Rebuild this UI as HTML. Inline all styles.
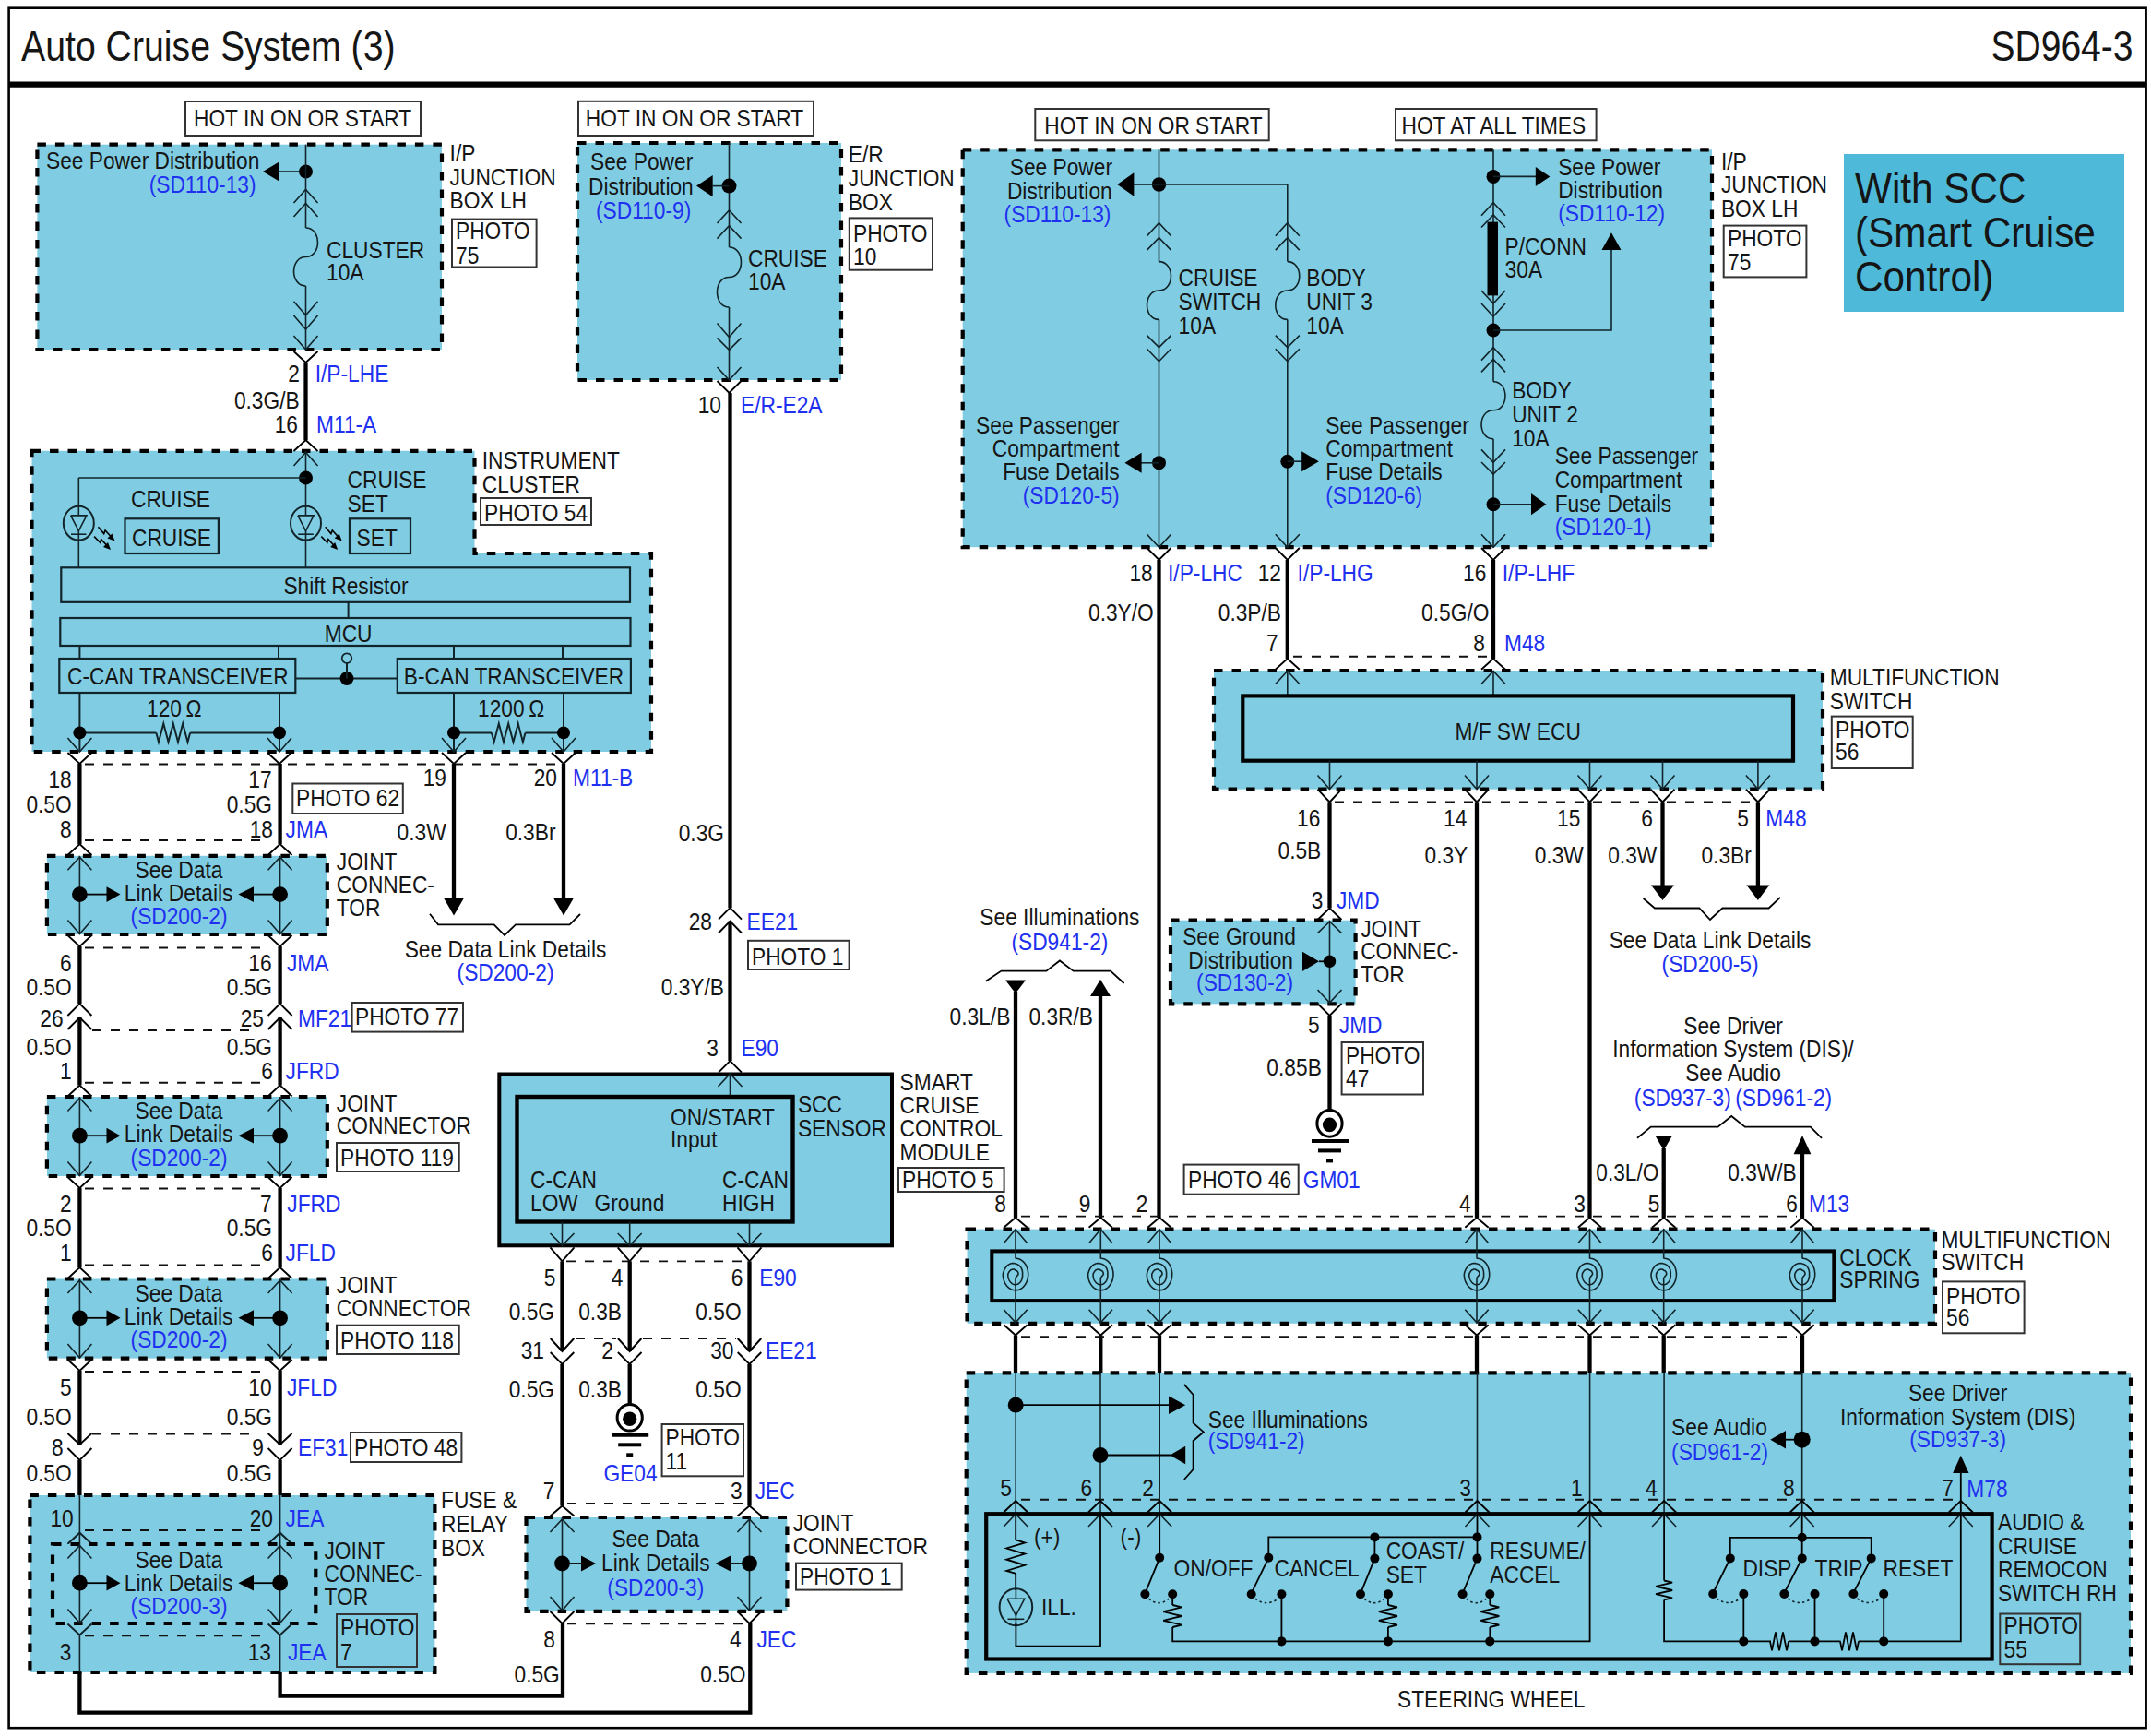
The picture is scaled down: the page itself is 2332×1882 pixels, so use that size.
<!DOCTYPE html>
<html><head><meta charset="utf-8"><style>
html,body{margin:0;padding:0;background:#fff;overflow:hidden;width:2332px;height:1882px;}
svg{display:block;}
text{font-family:"Liberation Sans",sans-serif;}
</style></head><body>
<svg width="2332" height="1882" viewBox="0 0 2332 1882">
<rect width="2332" height="1882" fill="#fff"/>
<rect x="9.6" y="8.7" width="2317" height="1864.5" fill="none" stroke="#000" stroke-width="2.6"/>
<line x1="9.6" y1="91.6" x2="2326.6" y2="91.6" stroke="#000" stroke-width="6.2"/>
<text transform="translate(23,66.3) scale(0.853,1)" font-size="46" fill="#151515">Auto Cruise System (3)</text>
<text transform="translate(2312.5,65.5) scale(0.86,1)" text-anchor="end" font-size="45.4" fill="#151515">SD964-3</text>
<rect x="201" y="110" width="255" height="37" fill="none" stroke="#333" stroke-width="2"/>
<text transform="translate(210,136.7) scale(0.91,1)" font-size="25" fill="#151515">HOT IN ON OR START</text>
<rect x="40.4" y="156.7" width="438.6" height="222.3" fill="#80cde3" stroke="#000" stroke-width="4.2" stroke-dasharray="9.5 10"/>
<text transform="translate(50,183) scale(0.91,1)" font-size="25" fill="#151515">See Power Distribution</text>
<text transform="translate(277.5,209) scale(0.91,1)" text-anchor="end" font-size="25" fill="#2030f0">(SD110-13)</text>
<polygon points="285,186 302.6,175.5 302.6,196.5" fill="#000"/>
<line x1="302" y1="186" x2="331.5" y2="186" stroke="#10242a" stroke-width="1.6"/>
<circle cx="331.5" cy="186" r="7.5" fill="#000"/>
<line x1="331.5" y1="156.7" x2="331.5" y2="247" stroke="#10242a" stroke-width="1.6"/>
<polyline points="318.5,220 331.5,205.5 344.5,220" stroke="#10242a" stroke-width="1.6" fill="none" stroke-linejoin="miter"/>
<polyline points="318.5,235 331.5,220.5 344.5,235" stroke="#10242a" stroke-width="1.6" fill="none" stroke-linejoin="miter"/>
<path d="M331.5,247 C348.8,247 348.8,278.5 331.5,278.5 C314.2,278.5 314.2,310 331.5,310" stroke="#10242a" stroke-width="1.6" fill="none"/>
<text transform="translate(354,280) scale(0.91,1)" font-size="25" fill="#151515">CLUSTER</text>
<text transform="translate(354,304) scale(0.91,1)" font-size="25" fill="#151515">10A</text>
<line x1="331.5" y1="310" x2="331.5" y2="379" stroke="#10242a" stroke-width="1.6"/>
<polyline points="318.5,326.7 331.5,341.7 344.5,326.7" stroke="#10242a" stroke-width="1.6" fill="none" stroke-linejoin="miter"/>
<polyline points="318.5,342 331.5,357 344.5,342" stroke="#10242a" stroke-width="1.6" fill="none" stroke-linejoin="miter"/>
<polyline points="318.5,364 331.5,379 344.5,364" stroke="#10242a" stroke-width="1.6" fill="none" stroke-linejoin="miter"/>
<polyline points="318.5,381 331.5,393 344.5,381" stroke="#000" stroke-width="1.9" fill="none" stroke-linejoin="miter"/>
<text transform="translate(487.6,175) scale(0.91,1)" font-size="25" fill="#151515">I/P</text>
<text transform="translate(487.6,200.5) scale(0.91,1)" font-size="25" fill="#151515">JUNCTION</text>
<text transform="translate(487.6,226) scale(0.91,1)" font-size="25" fill="#151515">BOX LH</text>
<rect x="490" y="237.6" width="91.6" height="51.9" fill="none" stroke="#333" stroke-width="2"/>
<text transform="translate(494,259) scale(0.91,1)" font-size="25" fill="#151515">PHOTO</text>
<text transform="translate(494,285.5) scale(0.91,1)" font-size="25" fill="#151515">75</text>
<line x1="331.5" y1="393" x2="331.5" y2="477" stroke="#000" stroke-width="4.3"/>
<text transform="translate(325,414) scale(0.91,1)" text-anchor="end" font-size="25" fill="#151515">2</text>
<text transform="translate(341.7,414) scale(0.91,1)" font-size="25" fill="#2030f0">I/P-LHE</text>
<text transform="translate(324.7,443) scale(0.91,1)" text-anchor="end" font-size="25" fill="#151515">0.3G/B</text>
<text transform="translate(323,468.5) scale(0.91,1)" text-anchor="end" font-size="25" fill="#151515">16</text>
<text transform="translate(343,468.5) scale(0.91,1)" font-size="25" fill="#2030f0">M11-A</text>
<polygon points="34.5,488.8 514.5,488.8 514.5,600 706,600 706,815 34.5,815" fill="#80cde3" stroke="#000" stroke-width="4.2" stroke-dasharray="9.5 10"/>
<polyline points="318.5,489 331.5,477 344.5,489" stroke="#000" stroke-width="1.9" fill="none" stroke-linejoin="miter"/>
<polyline points="318.5,505 331.5,490.5 344.5,505" stroke="#10242a" stroke-width="1.6" fill="none" stroke-linejoin="miter"/>
<line x1="331.5" y1="489" x2="331.5" y2="559" stroke="#10242a" stroke-width="1.6"/>
<line x1="331.5" y1="575" x2="331.5" y2="615" stroke="#10242a" stroke-width="1.6"/>
<circle cx="331.5" cy="518" r="7.5" fill="#000"/>
<line x1="85.3" y1="518" x2="331.5" y2="518" stroke="#10242a" stroke-width="1.6"/>
<line x1="85.3" y1="518" x2="85.3" y2="559" stroke="#10242a" stroke-width="1.6"/>
<line x1="85.3" y1="575" x2="85.3" y2="615" stroke="#10242a" stroke-width="1.6"/>
<ellipse cx="85.3" cy="567.2" rx="16.5" ry="18.4" fill="none" stroke="#10242a" stroke-width="2"/>
<polyline points="76.7,558.9 93.9,558.9 85.3,575.5 76.7,558.9" stroke="#10242a" stroke-width="1.6" fill="none" stroke-linejoin="miter"/>
<line x1="77" y1="579.2" x2="93.5" y2="579.2" stroke="#10242a" stroke-width="1.6"/>
<ellipse cx="331.5" cy="567.2" rx="16.5" ry="18.4" fill="none" stroke="#10242a" stroke-width="2"/>
<polyline points="322.9,558.9 340.1,558.9 331.5,575.5 322.9,558.9" stroke="#10242a" stroke-width="1.6" fill="none" stroke-linejoin="miter"/>
<line x1="323.2" y1="579.2" x2="339.8" y2="579.2" stroke="#10242a" stroke-width="1.6"/>
<polyline points="106.5,571.2 112.7,578.6 114.1,574.9 120.5,582" stroke="#000" stroke-width="1.6" fill="none" stroke-linejoin="miter"/>
<polygon points="124.5,586.5 116.5,583.5 121.5,578.5" fill="#000"/>
<polyline points="102.1,581.6 108.6,588.3 109.7,584.6 116,591.5" stroke="#000" stroke-width="1.6" fill="none" stroke-linejoin="miter"/>
<polygon points="120,596 112,593 117,588" fill="#000"/>
<polyline points="352.7,571.2 358.9,578.6 360.3,574.9 366.7,582" stroke="#000" stroke-width="1.6" fill="none" stroke-linejoin="miter"/>
<polygon points="370.7,586.5 362.7,583.5 367.7,578.5" fill="#000"/>
<polyline points="348.3,581.6 354.8,588.3 355.9,584.6 362.2,591.5" stroke="#000" stroke-width="1.6" fill="none" stroke-linejoin="miter"/>
<polygon points="366.2,596 358.2,593 363.2,588" fill="#000"/>
<text transform="translate(142,550.2) scale(0.91,1)" font-size="25" fill="#151515">CRUISE</text>
<rect x="135.5" y="562.3" width="101.4" height="37.7" fill="none" stroke="#10242a" stroke-width="2.2"/>
<text transform="translate(143,591.5) scale(0.91,1)" font-size="25" fill="#151515">CRUISE</text>
<text transform="translate(376.6,529) scale(0.91,1)" font-size="25" fill="#151515">CRUISE</text>
<text transform="translate(376.6,554.7) scale(0.91,1)" font-size="25" fill="#151515">SET</text>
<rect x="379" y="562.3" width="66" height="37.7" fill="none" stroke="#10242a" stroke-width="2.2"/>
<text transform="translate(386.6,591.5) scale(0.91,1)" font-size="25" fill="#151515">SET</text>
<text transform="translate(522.8,508) scale(0.91,1)" font-size="25" fill="#151515">INSTRUMENT</text>
<text transform="translate(522.8,534) scale(0.91,1)" font-size="25" fill="#151515">CLUSTER</text>
<rect x="521" y="540" width="120" height="29" fill="none" stroke="#333" stroke-width="2"/>
<text transform="translate(525,564.8) scale(0.91,1)" font-size="25" fill="#151515">PHOTO 54</text>
<rect x="66.3" y="615.3" width="616.7" height="37.5" fill="none" stroke="#10242a" stroke-width="2.2"/>
<text transform="translate(375,644.4) scale(0.91,1)" text-anchor="middle" font-size="25" fill="#151515">Shift Resistor</text>
<line x1="377.6" y1="652.8" x2="377.6" y2="670" stroke="#10242a" stroke-width="2"/>
<rect x="65.3" y="670" width="618.2" height="30" fill="none" stroke="#10242a" stroke-width="2.2"/>
<text transform="translate(377.6,695.6) scale(0.91,1)" text-anchor="middle" font-size="25" fill="#151515">MCU</text>
<line x1="86.4" y1="700" x2="86.4" y2="714" stroke="#10242a" stroke-width="2"/>
<line x1="302" y1="700" x2="302" y2="714" stroke="#10242a" stroke-width="2"/>
<line x1="492" y1="700" x2="492" y2="714" stroke="#10242a" stroke-width="2"/>
<line x1="610" y1="700" x2="610" y2="714" stroke="#10242a" stroke-width="2"/>
<rect x="64.3" y="714" width="256" height="37" fill="none" stroke="#10242a" stroke-width="2.2"/>
<text transform="translate(73,742) scale(0.91,1)" font-size="25" fill="#151515">C-CAN TRANSCEIVER</text>
<rect x="430.8" y="714" width="253.1" height="37" fill="none" stroke="#10242a" stroke-width="2.2"/>
<text transform="translate(437.8,742) scale(0.91,1)" font-size="25" fill="#151515">B-CAN TRANSCEIVER</text>
<line x1="320.3" y1="735.5" x2="430.8" y2="735.5" stroke="#10242a" stroke-width="2"/>
<circle cx="376" cy="735.5" r="7.4" fill="#000"/>
<circle cx="376" cy="713.7" r="5.3" fill="none" stroke="#10242a" stroke-width="1.8"/>
<line x1="376" y1="719" x2="376" y2="735.5" stroke="#10242a" stroke-width="2"/>
<line x1="86.4" y1="751" x2="86.4" y2="815" stroke="#10242a" stroke-width="2"/>
<line x1="303" y1="751" x2="303" y2="815" stroke="#10242a" stroke-width="2"/>
<line x1="492" y1="751" x2="492" y2="815" stroke="#10242a" stroke-width="2"/>
<line x1="611" y1="751" x2="611" y2="815" stroke="#10242a" stroke-width="2"/>
<line x1="86.4" y1="794.4" x2="169.4" y2="794.4" stroke="#10242a" stroke-width="2"/>
<polyline points="169.4,794.4 172,804.4 177.3,784.4 182.5,804.4 187.8,784.4 193,804.4 198.2,784.4 203.5,804.4 206.1,794.4" stroke="#10242a" stroke-width="2" fill="none" stroke-linejoin="miter"/>
<line x1="206.1" y1="794.4" x2="303" y2="794.4" stroke="#10242a" stroke-width="2"/>
<line x1="492" y1="794.4" x2="533" y2="794.4" stroke="#10242a" stroke-width="2"/>
<polyline points="533,794.4 535.6,804.4 540.8,784.4 546,804.4 551.2,784.4 556.5,804.4 561.7,784.4 566.9,804.4 569.5,794.4" stroke="#10242a" stroke-width="2" fill="none" stroke-linejoin="miter"/>
<line x1="569.5" y1="794.4" x2="611" y2="794.4" stroke="#10242a" stroke-width="2"/>
<circle cx="86.4" cy="794.4" r="7" fill="#000"/>
<polyline points="73.4,800 86.4,815 99.4,800" stroke="#10242a" stroke-width="1.6" fill="none" stroke-linejoin="miter"/>
<polyline points="73.4,816 86.4,828 99.4,816" stroke="#000" stroke-width="1.9" fill="none" stroke-linejoin="miter"/>
<circle cx="303" cy="794.4" r="7" fill="#000"/>
<polyline points="290,800 303,815 316,800" stroke="#10242a" stroke-width="1.6" fill="none" stroke-linejoin="miter"/>
<polyline points="290,816 303,828 316,816" stroke="#000" stroke-width="1.9" fill="none" stroke-linejoin="miter"/>
<circle cx="492" cy="794.4" r="7" fill="#000"/>
<polyline points="479,800 492,815 505,800" stroke="#10242a" stroke-width="1.6" fill="none" stroke-linejoin="miter"/>
<polyline points="479,816 492,828 505,816" stroke="#000" stroke-width="1.9" fill="none" stroke-linejoin="miter"/>
<circle cx="611" cy="794.4" r="7" fill="#000"/>
<polyline points="598,800 611,815 624,800" stroke="#10242a" stroke-width="1.6" fill="none" stroke-linejoin="miter"/>
<polyline points="598,816 611,828 624,816" stroke="#000" stroke-width="1.9" fill="none" stroke-linejoin="miter"/>
<text transform="translate(159,776.7) scale(0.91,1)" font-size="25" fill="#151515">120 Ω</text>
<text transform="translate(518,777) scale(0.91,1)" font-size="25" fill="#151515">1200 Ω</text>
<line x1="92" y1="828.5" x2="605" y2="828.5" stroke="#111" stroke-width="1.9" stroke-dasharray="10 10"/>
<line x1="86.4" y1="828" x2="86.4" y2="915" stroke="#000" stroke-width="4.3"/>
<line x1="303.6" y1="828" x2="303.6" y2="915" stroke="#000" stroke-width="4.3"/>
<text transform="translate(77.7,853.5) scale(0.91,1)" text-anchor="end" font-size="25" fill="#151515">18</text>
<text transform="translate(77.7,881) scale(0.91,1)" text-anchor="end" font-size="25" fill="#151515">0.5O</text>
<text transform="translate(77.7,907.7) scale(0.91,1)" text-anchor="end" font-size="25" fill="#151515">8</text>
<text transform="translate(294.6,853.5) scale(0.91,1)" text-anchor="end" font-size="25" fill="#151515">17</text>
<text transform="translate(295,881) scale(0.91,1)" text-anchor="end" font-size="25" fill="#151515">0.5G</text>
<text transform="translate(296,907.7) scale(0.91,1)" text-anchor="end" font-size="25" fill="#151515">18</text>
<text transform="translate(309.6,907.7) scale(0.91,1)" font-size="25" fill="#2030f0">JMA</text>
<rect x="317.3" y="849.5" width="119.5" height="32.5" fill="none" stroke="#333" stroke-width="2"/>
<text transform="translate(321,874) scale(0.91,1)" font-size="25" fill="#151515">PHOTO 62</text>
<text transform="translate(484,852) scale(0.91,1)" text-anchor="end" font-size="25" fill="#151515">19</text>
<text transform="translate(604,852) scale(0.91,1)" text-anchor="end" font-size="25" fill="#151515">20</text>
<text transform="translate(621,852) scale(0.91,1)" font-size="25" fill="#2030f0">M11-B</text>
<text transform="translate(483.7,911) scale(0.91,1)" text-anchor="end" font-size="25" fill="#151515">0.3W</text>
<text transform="translate(602.5,911) scale(0.91,1)" text-anchor="end" font-size="25" fill="#151515">0.3Br</text>
<line x1="492" y1="828" x2="492" y2="976" stroke="#000" stroke-width="4.3"/>
<line x1="611" y1="828" x2="611" y2="976" stroke="#000" stroke-width="4.3"/>
<polygon points="492,992.4 481.3,974 502.7,974" fill="#000"/>
<polygon points="611,992.4 600.3,974 621.7,974" fill="#000"/>
<polyline points="466,990.7 475,1002.4 535.6,1002.4 547,1014 559,1002.4 617.6,1002.4 629,991" stroke="#000" stroke-width="1.8" fill="none" stroke-linejoin="miter"/>
<text transform="translate(548,1037.6) scale(0.91,1)" text-anchor="middle" font-size="25" fill="#151515">See Data Link Details</text>
<text transform="translate(548,1063) scale(0.91,1)" text-anchor="middle" font-size="25" fill="#2030f0">(SD200-2)</text>
<line x1="92" y1="911" x2="292" y2="911" stroke="#111" stroke-width="1.9" stroke-dasharray="10 10"/>
<polyline points="73.4,927 86.4,915 99.4,927" stroke="#000" stroke-width="1.9" fill="none" stroke-linejoin="miter"/>
<polyline points="290.6,927 303.6,915 316.6,927" stroke="#000" stroke-width="1.9" fill="none" stroke-linejoin="miter"/>
<rect x="50.9" y="927.8" width="303.9" height="85.2" fill="#80cde3" stroke="#000" stroke-width="4.2" stroke-dasharray="9.5 10"/>
<line x1="86.4" y1="927.8" x2="86.4" y2="1013" stroke="#10242a" stroke-width="1.6"/>
<polyline points="73.4,943.3 86.4,929.3 99.4,943.3" stroke="#10242a" stroke-width="1.6" fill="none" stroke-linejoin="miter"/>
<polyline points="73.4,997.5 86.4,1012.5 99.4,997.5" stroke="#10242a" stroke-width="1.6" fill="none" stroke-linejoin="miter"/>
<line x1="303.6" y1="927.8" x2="303.6" y2="1013" stroke="#10242a" stroke-width="1.6"/>
<polyline points="290.6,943.3 303.6,929.3 316.6,943.3" stroke="#10242a" stroke-width="1.6" fill="none" stroke-linejoin="miter"/>
<polyline points="290.6,997.5 303.6,1012.5 316.6,997.5" stroke="#10242a" stroke-width="1.6" fill="none" stroke-linejoin="miter"/>
<circle cx="86.4" cy="969.6" r="8.4" fill="#000"/>
<circle cx="303.6" cy="969.6" r="8.4" fill="#000"/>
<line x1="86.4" y1="969.6" x2="116" y2="969.6" stroke="#000" stroke-width="1.8"/>
<polygon points="130.5,969.6 115.5,961.2 115.5,978" fill="#000"/>
<line x1="274" y1="969.6" x2="303.6" y2="969.6" stroke="#000" stroke-width="1.8"/>
<polygon points="258.4,969.6 275,961.2 275,978" fill="#000"/>
<text transform="translate(194,952) scale(0.91,1)" text-anchor="middle" font-size="25" fill="#151515">See Data</text>
<text transform="translate(193.6,977) scale(0.91,1)" text-anchor="middle" font-size="25" fill="#151515">Link Details</text>
<text transform="translate(194,1002.4) scale(0.91,1)" text-anchor="middle" font-size="25" fill="#2030f0">(SD200-2)</text>
<text transform="translate(364.8,942.8) scale(0.91,1)" font-size="25" fill="#151515">JOINT</text>
<text transform="translate(364.8,968.1) scale(0.91,1)" font-size="25" fill="#151515">CONNEC-</text>
<text transform="translate(364.8,993.4) scale(0.91,1)" font-size="25" fill="#151515">TOR</text>
<polyline points="73.4,1014 86.4,1026 99.4,1014" stroke="#000" stroke-width="1.9" fill="none" stroke-linejoin="miter"/>
<polyline points="290.6,1014 303.6,1026 316.6,1014" stroke="#000" stroke-width="1.9" fill="none" stroke-linejoin="miter"/>
<line x1="92" y1="1027.5" x2="292" y2="1027.5" stroke="#111" stroke-width="1.9" stroke-dasharray="10 10"/>
<line x1="86.4" y1="1026" x2="86.4" y2="1088" stroke="#000" stroke-width="4.3"/>
<line x1="303.6" y1="1026" x2="303.6" y2="1088" stroke="#000" stroke-width="4.3"/>
<text transform="translate(77.7,1052.6) scale(0.91,1)" text-anchor="end" font-size="25" fill="#151515">6</text>
<text transform="translate(77.7,1079.4) scale(0.91,1)" text-anchor="end" font-size="25" fill="#151515">0.5O</text>
<text transform="translate(68.6,1112.9) scale(0.91,1)" text-anchor="end" font-size="25" fill="#151515">26</text>
<text transform="translate(294.6,1052.6) scale(0.91,1)" text-anchor="end" font-size="25" fill="#151515">16</text>
<text transform="translate(311,1052.6) scale(0.91,1)" font-size="25" fill="#2030f0">JMA</text>
<text transform="translate(295,1079) scale(0.91,1)" text-anchor="end" font-size="25" fill="#151515">0.5G</text>
<text transform="translate(286,1113) scale(0.91,1)" text-anchor="end" font-size="25" fill="#151515">25</text>
<text transform="translate(323,1113) scale(0.91,1)" font-size="25" fill="#2030f0">MF21</text>
<rect x="381.6" y="1087" width="120.4" height="31.6" fill="none" stroke="#333" stroke-width="2"/>
<text transform="translate(385,1111) scale(0.91,1)" font-size="25" fill="#151515">PHOTO 77</text>
<polyline points="73.4,1101 86.4,1088 99.4,1101" stroke="#000" stroke-width="1.9" fill="none" stroke-linejoin="miter"/>
<polyline points="73.4,1116 86.4,1103 99.4,1116" stroke="#000" stroke-width="1.9" fill="none" stroke-linejoin="miter"/>
<line x1="86.4" y1="1103" x2="86.4" y2="1176.5" stroke="#000" stroke-width="4.3"/>
<polyline points="290.6,1101 303.6,1088 316.6,1101" stroke="#000" stroke-width="1.9" fill="none" stroke-linejoin="miter"/>
<polyline points="290.6,1116 303.6,1103 316.6,1116" stroke="#000" stroke-width="1.9" fill="none" stroke-linejoin="miter"/>
<line x1="303.6" y1="1103" x2="303.6" y2="1176.5" stroke="#000" stroke-width="4.3"/>
<line x1="100" y1="1117" x2="280" y2="1117" stroke="#111" stroke-width="1.9" stroke-dasharray="10 10"/>
<text transform="translate(77.7,1144) scale(0.91,1)" text-anchor="end" font-size="25" fill="#151515">0.5O</text>
<text transform="translate(77.7,1170) scale(0.91,1)" text-anchor="end" font-size="25" fill="#151515">1</text>
<text transform="translate(295,1144) scale(0.91,1)" text-anchor="end" font-size="25" fill="#151515">0.5G</text>
<text transform="translate(296,1170) scale(0.91,1)" text-anchor="end" font-size="25" fill="#151515">6</text>
<text transform="translate(309.6,1170) scale(0.91,1)" font-size="25" fill="#2030f0">JFRD</text>
<line x1="92" y1="1173.8" x2="292" y2="1173.8" stroke="#111" stroke-width="1.9" stroke-dasharray="10 10"/>
<polyline points="73.4,1188.5 86.4,1176.5 99.4,1188.5" stroke="#000" stroke-width="1.9" fill="none" stroke-linejoin="miter"/>
<polyline points="290.6,1188.5 303.6,1176.5 316.6,1188.5" stroke="#000" stroke-width="1.9" fill="none" stroke-linejoin="miter"/>
<rect x="50.9" y="1189" width="303.9" height="86" fill="#80cde3" stroke="#000" stroke-width="4.2" stroke-dasharray="9.5 10"/>
<line x1="86.4" y1="1189" x2="86.4" y2="1275" stroke="#10242a" stroke-width="1.6"/>
<polyline points="73.4,1204.5 86.4,1190.5 99.4,1204.5" stroke="#10242a" stroke-width="1.6" fill="none" stroke-linejoin="miter"/>
<polyline points="73.4,1259.5 86.4,1274.5 99.4,1259.5" stroke="#10242a" stroke-width="1.6" fill="none" stroke-linejoin="miter"/>
<line x1="303.6" y1="1189" x2="303.6" y2="1275" stroke="#10242a" stroke-width="1.6"/>
<polyline points="290.6,1204.5 303.6,1190.5 316.6,1204.5" stroke="#10242a" stroke-width="1.6" fill="none" stroke-linejoin="miter"/>
<polyline points="290.6,1259.5 303.6,1274.5 316.6,1259.5" stroke="#10242a" stroke-width="1.6" fill="none" stroke-linejoin="miter"/>
<circle cx="86.4" cy="1231.2" r="8.4" fill="#000"/>
<circle cx="303.6" cy="1231.2" r="8.4" fill="#000"/>
<line x1="86.4" y1="1231.2" x2="116" y2="1231.2" stroke="#000" stroke-width="1.8"/>
<polygon points="130.5,1231.2 115.5,1222.8 115.5,1239.6" fill="#000"/>
<line x1="274" y1="1231.2" x2="303.6" y2="1231.2" stroke="#000" stroke-width="1.8"/>
<polygon points="258.4,1231.2 275,1222.8 275,1239.6" fill="#000"/>
<text transform="translate(194,1213.2) scale(0.91,1)" text-anchor="middle" font-size="25" fill="#151515">See Data</text>
<text transform="translate(193.6,1238.2) scale(0.91,1)" text-anchor="middle" font-size="25" fill="#151515">Link Details</text>
<text transform="translate(194,1263.6) scale(0.91,1)" text-anchor="middle" font-size="25" fill="#2030f0">(SD200-2)</text>
<text transform="translate(364.8,1205) scale(0.91,1)" font-size="25" fill="#151515">JOINT</text>
<text transform="translate(364.8,1229) scale(0.91,1)" font-size="25" fill="#151515">CONNECTOR</text>
<rect x="365" y="1239" width="132.7" height="31" fill="none" stroke="#333" stroke-width="2"/>
<text transform="translate(369,1263.5) scale(0.91,1)" font-size="25" fill="#151515">PHOTO 119</text>
<polyline points="73.4,1276 86.4,1288 99.4,1276" stroke="#000" stroke-width="1.9" fill="none" stroke-linejoin="miter"/>
<polyline points="290.6,1276 303.6,1288 316.6,1276" stroke="#000" stroke-width="1.9" fill="none" stroke-linejoin="miter"/>
<line x1="92" y1="1288.5" x2="292" y2="1288.5" stroke="#111" stroke-width="1.9" stroke-dasharray="10 10"/>
<line x1="86.4" y1="1288" x2="86.4" y2="1374" stroke="#000" stroke-width="4.3"/>
<line x1="303.6" y1="1288" x2="303.6" y2="1374" stroke="#000" stroke-width="4.3"/>
<text transform="translate(77.7,1313.6) scale(0.91,1)" text-anchor="end" font-size="25" fill="#151515">2</text>
<text transform="translate(77.7,1340) scale(0.91,1)" text-anchor="end" font-size="25" fill="#151515">0.5O</text>
<text transform="translate(77.7,1367) scale(0.91,1)" text-anchor="end" font-size="25" fill="#151515">1</text>
<text transform="translate(294.6,1313.6) scale(0.91,1)" text-anchor="end" font-size="25" fill="#151515">7</text>
<text transform="translate(311.3,1313.6) scale(0.91,1)" font-size="25" fill="#2030f0">JFRD</text>
<text transform="translate(295,1340) scale(0.91,1)" text-anchor="end" font-size="25" fill="#151515">0.5G</text>
<text transform="translate(296,1367) scale(0.91,1)" text-anchor="end" font-size="25" fill="#151515">6</text>
<text transform="translate(309.6,1367) scale(0.91,1)" font-size="25" fill="#2030f0">JFLD</text>
<line x1="92" y1="1371.5" x2="292" y2="1371.5" stroke="#111" stroke-width="1.9" stroke-dasharray="10 10"/>
<polyline points="73.4,1386 86.4,1374 99.4,1386" stroke="#000" stroke-width="1.9" fill="none" stroke-linejoin="miter"/>
<polyline points="290.6,1386 303.6,1374 316.6,1386" stroke="#000" stroke-width="1.9" fill="none" stroke-linejoin="miter"/>
<rect x="50.9" y="1386.5" width="303.9" height="86.1" fill="#80cde3" stroke="#000" stroke-width="4.2" stroke-dasharray="9.5 10"/>
<line x1="86.4" y1="1386.5" x2="86.4" y2="1472.6" stroke="#10242a" stroke-width="1.6"/>
<polyline points="73.4,1402 86.4,1388 99.4,1402" stroke="#10242a" stroke-width="1.6" fill="none" stroke-linejoin="miter"/>
<polyline points="73.4,1457.1 86.4,1472.1 99.4,1457.1" stroke="#10242a" stroke-width="1.6" fill="none" stroke-linejoin="miter"/>
<line x1="303.6" y1="1386.5" x2="303.6" y2="1472.6" stroke="#10242a" stroke-width="1.6"/>
<polyline points="290.6,1402 303.6,1388 316.6,1402" stroke="#10242a" stroke-width="1.6" fill="none" stroke-linejoin="miter"/>
<polyline points="290.6,1457.1 303.6,1472.1 316.6,1457.1" stroke="#10242a" stroke-width="1.6" fill="none" stroke-linejoin="miter"/>
<circle cx="86.4" cy="1428.8" r="8.4" fill="#000"/>
<circle cx="303.6" cy="1428.8" r="8.4" fill="#000"/>
<line x1="86.4" y1="1428.8" x2="116" y2="1428.8" stroke="#000" stroke-width="1.8"/>
<polygon points="130.5,1428.8 115.5,1420.3 115.5,1437.2" fill="#000"/>
<line x1="274" y1="1428.8" x2="303.6" y2="1428.8" stroke="#000" stroke-width="1.8"/>
<polygon points="258.4,1428.8 275,1420.3 275,1437.2" fill="#000"/>
<text transform="translate(194,1410.7) scale(0.91,1)" text-anchor="middle" font-size="25" fill="#151515">See Data</text>
<text transform="translate(193.6,1435.7) scale(0.91,1)" text-anchor="middle" font-size="25" fill="#151515">Link Details</text>
<text transform="translate(194,1461.1) scale(0.91,1)" text-anchor="middle" font-size="25" fill="#2030f0">(SD200-2)</text>
<text transform="translate(364.8,1402) scale(0.91,1)" font-size="25" fill="#151515">JOINT</text>
<text transform="translate(364.8,1427) scale(0.91,1)" font-size="25" fill="#151515">CONNECTOR</text>
<rect x="365" y="1436.7" width="132.7" height="31.3" fill="none" stroke="#333" stroke-width="2"/>
<text transform="translate(369,1462) scale(0.91,1)" font-size="25" fill="#151515">PHOTO 118</text>
<polyline points="73.4,1474 86.4,1486 99.4,1474" stroke="#000" stroke-width="1.9" fill="none" stroke-linejoin="miter"/>
<polyline points="290.6,1474 303.6,1486 316.6,1474" stroke="#000" stroke-width="1.9" fill="none" stroke-linejoin="miter"/>
<line x1="92" y1="1487" x2="292" y2="1487" stroke="#111" stroke-width="1.9" stroke-dasharray="10 10"/>
<line x1="86.4" y1="1486" x2="86.4" y2="1566" stroke="#000" stroke-width="4.3"/>
<line x1="303.6" y1="1486" x2="303.6" y2="1566" stroke="#000" stroke-width="4.3"/>
<text transform="translate(77.7,1512.7) scale(0.91,1)" text-anchor="end" font-size="25" fill="#151515">5</text>
<text transform="translate(77.7,1544.5) scale(0.91,1)" text-anchor="end" font-size="25" fill="#151515">0.5O</text>
<text transform="translate(68.6,1578) scale(0.91,1)" text-anchor="end" font-size="25" fill="#151515">8</text>
<text transform="translate(77.7,1606.4) scale(0.91,1)" text-anchor="end" font-size="25" fill="#151515">0.5O</text>
<text transform="translate(294.6,1512.7) scale(0.91,1)" text-anchor="end" font-size="25" fill="#151515">10</text>
<text transform="translate(311,1512.7) scale(0.91,1)" font-size="25" fill="#2030f0">JFLD</text>
<text transform="translate(295,1544.5) scale(0.91,1)" text-anchor="end" font-size="25" fill="#151515">0.5G</text>
<text transform="translate(286,1578) scale(0.91,1)" text-anchor="end" font-size="25" fill="#151515">9</text>
<text transform="translate(323,1578) scale(0.91,1)" font-size="25" fill="#2030f0">EF31</text>
<rect x="380" y="1553" width="120.4" height="32" fill="none" stroke="#333" stroke-width="2"/>
<text transform="translate(384,1578) scale(0.91,1)" font-size="25" fill="#151515">PHOTO 48</text>
<polyline points="73.4,1554 86.4,1566 99.4,1554" stroke="#000" stroke-width="1.9" fill="none" stroke-linejoin="miter"/>
<polyline points="73.4,1570 86.4,1583 99.4,1570" stroke="#000" stroke-width="1.9" fill="none" stroke-linejoin="miter"/>
<line x1="86.4" y1="1583" x2="86.4" y2="1621" stroke="#000" stroke-width="4.3"/>
<polyline points="290.6,1554 303.6,1566 316.6,1554" stroke="#000" stroke-width="1.9" fill="none" stroke-linejoin="miter"/>
<polyline points="290.6,1570 303.6,1583 316.6,1570" stroke="#000" stroke-width="1.9" fill="none" stroke-linejoin="miter"/>
<line x1="303.6" y1="1583" x2="303.6" y2="1621" stroke="#000" stroke-width="4.3"/>
<line x1="100" y1="1554.6" x2="280" y2="1554.6" stroke="#111" stroke-width="1.9" stroke-dasharray="10 10"/>
<text transform="translate(295,1606.4) scale(0.91,1)" text-anchor="end" font-size="25" fill="#151515">0.5G</text>
<rect x="32.4" y="1621" width="439" height="192" fill="#80cde3" stroke="#000" stroke-width="4.2" stroke-dasharray="9.5 10"/>
<text transform="translate(478,1635) scale(0.91,1)" font-size="25" fill="#151515">FUSE &amp;</text>
<text transform="translate(478,1660.9) scale(0.91,1)" font-size="25" fill="#151515">RELAY</text>
<text transform="translate(478,1686.8) scale(0.91,1)" font-size="25" fill="#151515">BOX</text>
<line x1="86.4" y1="1621" x2="86.4" y2="1674" stroke="#10242a" stroke-width="1.6"/>
<polyline points="73.4,1673.7 86.4,1661.7 99.4,1673.7" stroke="#10242a" stroke-width="2" fill="none" stroke-linejoin="miter"/>
<line x1="303.6" y1="1621" x2="303.6" y2="1674" stroke="#10242a" stroke-width="1.6"/>
<polyline points="290.6,1673.7 303.6,1661.7 316.6,1673.7" stroke="#10242a" stroke-width="2" fill="none" stroke-linejoin="miter"/>
<text transform="translate(79.7,1655) scale(0.91,1)" text-anchor="end" font-size="25" fill="#151515">10</text>
<text transform="translate(296,1655) scale(0.91,1)" text-anchor="end" font-size="25" fill="#151515">20</text>
<text transform="translate(309.6,1655) scale(0.91,1)" font-size="25" fill="#2030f0">JEA</text>
<line x1="92" y1="1659" x2="292" y2="1659" stroke="#111" stroke-width="1.9" stroke-dasharray="10 10"/>
<rect x="57" y="1674" width="285.3" height="86" fill="#80cde3" stroke="#000" stroke-width="4.2" stroke-dasharray="9.5 10"/>
<line x1="86.4" y1="1674" x2="86.4" y2="1760" stroke="#10242a" stroke-width="1.6"/>
<polyline points="73.4,1689.5 86.4,1675.5 99.4,1689.5" stroke="#10242a" stroke-width="1.6" fill="none" stroke-linejoin="miter"/>
<polyline points="73.4,1744.5 86.4,1759.5 99.4,1744.5" stroke="#10242a" stroke-width="1.6" fill="none" stroke-linejoin="miter"/>
<line x1="303.6" y1="1674" x2="303.6" y2="1760" stroke="#10242a" stroke-width="1.6"/>
<polyline points="290.6,1689.5 303.6,1675.5 316.6,1689.5" stroke="#10242a" stroke-width="1.6" fill="none" stroke-linejoin="miter"/>
<polyline points="290.6,1744.5 303.6,1759.5 316.6,1744.5" stroke="#10242a" stroke-width="1.6" fill="none" stroke-linejoin="miter"/>
<circle cx="86.4" cy="1716.2" r="8.4" fill="#000"/>
<circle cx="303.6" cy="1716.2" r="8.4" fill="#000"/>
<line x1="86.4" y1="1716.2" x2="116" y2="1716.2" stroke="#000" stroke-width="1.8"/>
<polygon points="130.5,1716.2 115.5,1707.8 115.5,1724.6" fill="#000"/>
<line x1="274" y1="1716.2" x2="303.6" y2="1716.2" stroke="#000" stroke-width="1.8"/>
<polygon points="258.4,1716.2 275,1707.8 275,1724.6" fill="#000"/>
<text transform="translate(194,1700) scale(0.91,1)" text-anchor="middle" font-size="25" fill="#151515">See Data</text>
<text transform="translate(193.6,1725) scale(0.91,1)" text-anchor="middle" font-size="25" fill="#151515">Link Details</text>
<text transform="translate(194,1750.4) scale(0.91,1)" text-anchor="middle" font-size="25" fill="#2030f0">(SD200-3)</text>
<text transform="translate(351.5,1690) scale(0.91,1)" font-size="25" fill="#151515">JOINT</text>
<text transform="translate(351.5,1715) scale(0.91,1)" font-size="25" fill="#151515">CONNEC-</text>
<text transform="translate(351.5,1740) scale(0.91,1)" font-size="25" fill="#151515">TOR</text>
<polyline points="73.4,1760.4 86.4,1772.4 99.4,1760.4" stroke="#10242a" stroke-width="2" fill="none" stroke-linejoin="miter"/>
<line x1="86.4" y1="1772" x2="86.4" y2="1813" stroke="#10242a" stroke-width="1.6"/>
<polyline points="290.6,1760.4 303.6,1772.4 316.6,1760.4" stroke="#10242a" stroke-width="2" fill="none" stroke-linejoin="miter"/>
<line x1="303.6" y1="1772" x2="303.6" y2="1813" stroke="#10242a" stroke-width="1.6"/>
<line x1="92" y1="1773.4" x2="292" y2="1773.4" stroke="#111" stroke-width="1.9" stroke-dasharray="10 10"/>
<text transform="translate(77.4,1800) scale(0.91,1)" text-anchor="end" font-size="25" fill="#151515">3</text>
<text transform="translate(294,1800) scale(0.91,1)" text-anchor="end" font-size="25" fill="#151515">13</text>
<text transform="translate(311.9,1800) scale(0.91,1)" font-size="25" fill="#2030f0">JEA</text>
<rect x="365" y="1750" width="87" height="57" fill="none" stroke="#333" stroke-width="2"/>
<text transform="translate(369,1773) scale(0.91,1)" font-size="25" fill="#151515">PHOTO</text>
<text transform="translate(369,1800) scale(0.91,1)" font-size="25" fill="#151515">7</text>
<polyline points="86.4,1813 86.4,1856.6 813.3,1856.6 813.3,1760" stroke="#000" stroke-width="4.3" fill="none" stroke-linejoin="miter"/>
<polyline points="303.6,1813 303.6,1838.7 610,1838.7 610,1760" stroke="#000" stroke-width="4.3" fill="none" stroke-linejoin="miter"/>
<rect x="627" y="109.8" width="255" height="37.2" fill="none" stroke="#333" stroke-width="2"/>
<text transform="translate(634.8,136.5) scale(0.91,1)" font-size="25" fill="#151515">HOT IN ON OR START</text>
<rect x="626" y="155" width="286" height="257" fill="#80cde3" stroke="#000" stroke-width="4.2" stroke-dasharray="9.5 10"/>
<line x1="790.5" y1="155" x2="790.5" y2="268" stroke="#10242a" stroke-width="1.6"/>
<circle cx="790.5" cy="201.6" r="8" fill="#000"/>
<polygon points="755,201.6 772.7,190 772.7,213.2" fill="#000"/>
<line x1="772" y1="201.6" x2="790.5" y2="201.6" stroke="#10242a" stroke-width="1.6"/>
<text transform="translate(640,184) scale(0.91,1)" font-size="25" fill="#151515">See Power</text>
<text transform="translate(638,211) scale(0.91,1)" font-size="25" fill="#151515">Distribution</text>
<text transform="translate(646,236.5) scale(0.91,1)" font-size="25" fill="#2030f0">(SD110-9)</text>
<polyline points="777.5,242 790.5,228 803.5,242" stroke="#10242a" stroke-width="1.6" fill="none" stroke-linejoin="miter"/>
<polyline points="777.5,258.6 790.5,244.6 803.5,258.6" stroke="#10242a" stroke-width="1.6" fill="none" stroke-linejoin="miter"/>
<path d="M790.5,268 C807.8,268 807.8,300.5 790.5,300.5 C773.2,300.5 773.2,333 790.5,333" stroke="#10242a" stroke-width="1.6" fill="none"/>
<text transform="translate(811,288.7) scale(0.91,1)" font-size="25" fill="#151515">CRUISE</text>
<text transform="translate(811,314) scale(0.91,1)" font-size="25" fill="#151515">10A</text>
<line x1="790.5" y1="333" x2="790.5" y2="412" stroke="#10242a" stroke-width="1.6"/>
<polyline points="777.5,350.5 790.5,365.5 803.5,350.5" stroke="#10242a" stroke-width="1.6" fill="none" stroke-linejoin="miter"/>
<polyline points="777.5,366.4 790.5,379.4 803.5,366.4" stroke="#10242a" stroke-width="1.6" fill="none" stroke-linejoin="miter"/>
<polyline points="777.5,398 790.5,412 803.5,398" stroke="#10242a" stroke-width="1.6" fill="none" stroke-linejoin="miter"/>
<polyline points="777.5,413 790.5,426 803.5,413" stroke="#000" stroke-width="1.9" fill="none" stroke-linejoin="miter"/>
<text transform="translate(919.8,176) scale(0.91,1)" font-size="25" fill="#151515">E/R</text>
<text transform="translate(919.8,201.8) scale(0.91,1)" font-size="25" fill="#151515">JUNCTION</text>
<text transform="translate(919.8,227.6) scale(0.91,1)" font-size="25" fill="#151515">BOX</text>
<rect x="920.8" y="236.4" width="90.2" height="56.3" fill="none" stroke="#333" stroke-width="2"/>
<text transform="translate(925,261.5) scale(0.91,1)" font-size="25" fill="#151515">PHOTO</text>
<text transform="translate(925,286.5) scale(0.91,1)" font-size="25" fill="#151515">10</text>
<text transform="translate(782,448) scale(0.91,1)" text-anchor="end" font-size="25" fill="#151515">10</text>
<text transform="translate(803,448) scale(0.91,1)" font-size="25" fill="#2030f0">E/R-E2A</text>
<line x1="791.5" y1="426" x2="791.5" y2="984" stroke="#000" stroke-width="4.3"/>
<text transform="translate(785,911.6) scale(0.91,1)" text-anchor="end" font-size="25" fill="#151515">0.3G</text>
<polyline points="779,996.7 791.5,984 804,996.7" stroke="#000" stroke-width="1.9" fill="none" stroke-linejoin="miter"/>
<polyline points="779,1011.5 791.5,998.5 804,1011.5" stroke="#000" stroke-width="1.9" fill="none" stroke-linejoin="miter"/>
<text transform="translate(772,1008) scale(0.91,1)" text-anchor="end" font-size="25" fill="#151515">28</text>
<text transform="translate(809.6,1008) scale(0.91,1)" font-size="25" fill="#2030f0">EE21</text>
<rect x="811" y="1019.8" width="109.6" height="31.2" fill="none" stroke="#333" stroke-width="2"/>
<text transform="translate(815,1045.5) scale(0.91,1)" font-size="25" fill="#151515">PHOTO 1</text>
<line x1="791.5" y1="998.5" x2="791.5" y2="1150" stroke="#000" stroke-width="4.3"/>
<text transform="translate(785,1079) scale(0.91,1)" text-anchor="end" font-size="25" fill="#151515">0.3Y/B</text>
<text transform="translate(779,1144.5) scale(0.91,1)" text-anchor="end" font-size="25" fill="#151515">3</text>
<text transform="translate(803.5,1144.5) scale(0.91,1)" font-size="25" fill="#2030f0">E90</text>
<polyline points="779,1162.6 791.5,1150 804,1162.6" stroke="#000" stroke-width="1.9" fill="none" stroke-linejoin="miter"/>
<rect x="541.3" y="1164.5" width="425.7" height="185.8" fill="#80cde3" stroke="#000" stroke-width="4"/>
<polyline points="778.5,1178 791.5,1164 804.5,1178" stroke="#10242a" stroke-width="1.6" fill="none" stroke-linejoin="miter"/>
<line x1="791.5" y1="1164" x2="791.5" y2="1189" stroke="#10242a" stroke-width="1.6"/>
<rect x="560.5" y="1189" width="299" height="135.5" fill="none" stroke="#000" stroke-width="4.4"/>
<text transform="translate(864.9,1206) scale(0.91,1)" font-size="25" fill="#151515">SCC</text>
<text transform="translate(864.9,1232.4) scale(0.91,1)" font-size="25" fill="#151515">SENSOR</text>
<text transform="translate(975.6,1182) scale(0.91,1)" font-size="25" fill="#151515">SMART</text>
<text transform="translate(975.6,1207.2) scale(0.91,1)" font-size="25" fill="#151515">CRUISE</text>
<text transform="translate(975.6,1232.4) scale(0.91,1)" font-size="25" fill="#151515">CONTROL</text>
<text transform="translate(975.6,1257.6) scale(0.91,1)" font-size="25" fill="#151515">MODULE</text>
<rect x="974" y="1266" width="114.6" height="26" fill="none" stroke="#333" stroke-width="2"/>
<text transform="translate(978,1288) scale(0.91,1)" font-size="25" fill="#151515">PHOTO 5</text>
<text transform="translate(727,1219.8) scale(0.91,1)" font-size="25" fill="#151515">ON/START</text>
<text transform="translate(727,1243.5) scale(0.91,1)" font-size="25" fill="#151515">Input</text>
<text transform="translate(575,1288) scale(0.91,1)" font-size="25" fill="#151515">C-CAN</text>
<text transform="translate(575,1313.3) scale(0.91,1)" font-size="25" fill="#151515">LOW</text>
<text transform="translate(644.5,1313.3) scale(0.91,1)" font-size="25" fill="#151515">Ground</text>
<text transform="translate(783,1288) scale(0.91,1)" font-size="25" fill="#151515">C-CAN</text>
<text transform="translate(783,1313.3) scale(0.91,1)" font-size="25" fill="#151515">HIGH</text>
<line x1="609.5" y1="1324.5" x2="609.5" y2="1350" stroke="#10242a" stroke-width="1.6"/>
<polyline points="596.5,1337 609.5,1350 622.5,1337" stroke="#10242a" stroke-width="1.6" fill="none" stroke-linejoin="miter"/>
<polyline points="596.5,1352.4 609.5,1367.4 622.5,1352.4" stroke="#000" stroke-width="1.9" fill="none" stroke-linejoin="miter"/>
<line x1="682.7" y1="1324.5" x2="682.7" y2="1350" stroke="#10242a" stroke-width="1.6"/>
<polyline points="669.7,1337 682.7,1350 695.7,1337" stroke="#10242a" stroke-width="1.6" fill="none" stroke-linejoin="miter"/>
<polyline points="669.7,1352.4 682.7,1367.4 695.7,1352.4" stroke="#000" stroke-width="1.9" fill="none" stroke-linejoin="miter"/>
<line x1="812.5" y1="1324.5" x2="812.5" y2="1350" stroke="#10242a" stroke-width="1.6"/>
<polyline points="799.5,1337 812.5,1350 825.5,1337" stroke="#10242a" stroke-width="1.6" fill="none" stroke-linejoin="miter"/>
<polyline points="799.5,1352.4 812.5,1367.4 825.5,1352.4" stroke="#000" stroke-width="1.9" fill="none" stroke-linejoin="miter"/>
<line x1="614" y1="1367.4" x2="808" y2="1367.4" stroke="#111" stroke-width="1.9" stroke-dasharray="10 10"/>
<text transform="translate(602.5,1393.5) scale(0.91,1)" text-anchor="end" font-size="25" fill="#151515">5</text>
<text transform="translate(675.3,1393.5) scale(0.91,1)" text-anchor="end" font-size="25" fill="#151515">4</text>
<text transform="translate(805.5,1393.5) scale(0.91,1)" text-anchor="end" font-size="25" fill="#151515">6</text>
<text transform="translate(823.3,1393.5) scale(0.91,1)" font-size="25" fill="#2030f0">E90</text>
<line x1="609.5" y1="1367.4" x2="609.5" y2="1465" stroke="#000" stroke-width="4.3"/>
<line x1="682.7" y1="1367.4" x2="682.7" y2="1465" stroke="#000" stroke-width="4.3"/>
<line x1="812.5" y1="1367.4" x2="812.5" y2="1465" stroke="#000" stroke-width="4.3"/>
<text transform="translate(601,1431) scale(0.91,1)" text-anchor="end" font-size="25" fill="#151515">0.5G</text>
<text transform="translate(674,1431) scale(0.91,1)" text-anchor="end" font-size="25" fill="#151515">0.3B</text>
<text transform="translate(803.6,1431) scale(0.91,1)" text-anchor="end" font-size="25" fill="#151515">0.5O</text>
<polyline points="596.7,1451 609.5,1465 622.3,1451" stroke="#000" stroke-width="1.9" fill="none" stroke-linejoin="miter"/>
<polyline points="596.7,1466 609.5,1479 622.3,1466" stroke="#000" stroke-width="1.9" fill="none" stroke-linejoin="miter"/>
<polyline points="669.9,1451 682.7,1465 695.5,1451" stroke="#000" stroke-width="1.9" fill="none" stroke-linejoin="miter"/>
<polyline points="669.9,1466 682.7,1479 695.5,1466" stroke="#000" stroke-width="1.9" fill="none" stroke-linejoin="miter"/>
<polyline points="799.7,1451 812.5,1465 825.3,1451" stroke="#000" stroke-width="1.9" fill="none" stroke-linejoin="miter"/>
<polyline points="799.7,1466 812.5,1479 825.3,1466" stroke="#000" stroke-width="1.9" fill="none" stroke-linejoin="miter"/>
<line x1="624" y1="1451" x2="668" y2="1451" stroke="#111" stroke-width="1.9" stroke-dasharray="10 10"/>
<line x1="697" y1="1451" x2="798" y2="1451" stroke="#111" stroke-width="1.9" stroke-dasharray="10 10"/>
<text transform="translate(590,1473) scale(0.91,1)" text-anchor="end" font-size="25" fill="#151515">31</text>
<text transform="translate(665,1473) scale(0.91,1)" text-anchor="end" font-size="25" fill="#151515">2</text>
<text transform="translate(795.5,1473) scale(0.91,1)" text-anchor="end" font-size="25" fill="#151515">30</text>
<text transform="translate(830,1473) scale(0.91,1)" font-size="25" fill="#2030f0">EE21</text>
<line x1="609.5" y1="1479" x2="609.5" y2="1632.4" stroke="#000" stroke-width="4.3"/>
<line x1="812.5" y1="1479" x2="812.5" y2="1632.4" stroke="#000" stroke-width="4.3"/>
<line x1="682.7" y1="1479" x2="682.7" y2="1524" stroke="#000" stroke-width="4.3"/>
<text transform="translate(601,1515) scale(0.91,1)" text-anchor="end" font-size="25" fill="#151515">0.5G</text>
<text transform="translate(674,1515) scale(0.91,1)" text-anchor="end" font-size="25" fill="#151515">0.3B</text>
<text transform="translate(803.6,1515) scale(0.91,1)" text-anchor="end" font-size="25" fill="#151515">0.5O</text>
<ellipse cx="682.7" cy="1536.8" rx="13.6" ry="14.3" fill="none" stroke="#000" stroke-width="3"/>
<ellipse cx="682.7" cy="1538.3" rx="7.6" ry="7.8" fill="#000"/>
<line x1="663.2" y1="1555.8" x2="703.2" y2="1555.8" stroke="#000" stroke-width="4"/>
<line x1="670.2" y1="1566.3" x2="695.2" y2="1566.3" stroke="#000" stroke-width="4"/>
<line x1="679.2" y1="1577.3" x2="686.2" y2="1577.3" stroke="#000" stroke-width="4"/>
<text transform="translate(654.4,1605.7) scale(0.91,1)" font-size="25" fill="#2030f0">GE04</text>
<rect x="717.6" y="1544" width="88.4" height="56.3" fill="none" stroke="#333" stroke-width="2"/>
<text transform="translate(721.5,1567.3) scale(0.91,1)" font-size="25" fill="#151515">PHOTO</text>
<text transform="translate(721.5,1593) scale(0.91,1)" font-size="25" fill="#151515">11</text>
<text transform="translate(601.4,1624.5) scale(0.91,1)" text-anchor="end" font-size="25" fill="#151515">7</text>
<text transform="translate(804.7,1624.5) scale(0.91,1)" text-anchor="end" font-size="25" fill="#151515">3</text>
<text transform="translate(818.7,1625) scale(0.91,1)" font-size="25" fill="#2030f0">JEC</text>
<line x1="615" y1="1630" x2="807" y2="1630" stroke="#111" stroke-width="1.9" stroke-dasharray="10 10"/>
<polyline points="596.5,1643.4 609.5,1632.4 622.5,1643.4" stroke="#000" stroke-width="1.9" fill="none" stroke-linejoin="miter"/>
<polyline points="799.5,1643.4 812.5,1632.4 825.5,1643.4" stroke="#000" stroke-width="1.9" fill="none" stroke-linejoin="miter"/>
<rect x="570.5" y="1645" width="282.9" height="101.8" fill="#80cde3" stroke="#000" stroke-width="4.2" stroke-dasharray="9.5 10"/>
<line x1="609.5" y1="1645" x2="609.5" y2="1746.8" stroke="#10242a" stroke-width="1.6"/>
<polyline points="596.5,1661 609.5,1647 622.5,1661" stroke="#10242a" stroke-width="1.6" fill="none" stroke-linejoin="miter"/>
<polyline points="596.5,1731 609.5,1746 622.5,1731" stroke="#10242a" stroke-width="1.6" fill="none" stroke-linejoin="miter"/>
<line x1="812.5" y1="1645" x2="812.5" y2="1746.8" stroke="#10242a" stroke-width="1.6"/>
<polyline points="799.5,1661 812.5,1647 825.5,1661" stroke="#10242a" stroke-width="1.6" fill="none" stroke-linejoin="miter"/>
<polyline points="799.5,1731 812.5,1746 825.5,1731" stroke="#10242a" stroke-width="1.6" fill="none" stroke-linejoin="miter"/>
<circle cx="609.5" cy="1695" r="8.4" fill="#000"/>
<circle cx="812.5" cy="1695" r="8.4" fill="#000"/>
<line x1="609.5" y1="1695" x2="630" y2="1695" stroke="#000" stroke-width="1.8"/>
<polygon points="646,1695 630,1686.6 630,1703.4" fill="#000"/>
<line x1="792" y1="1695" x2="812.5" y2="1695" stroke="#000" stroke-width="1.8"/>
<polygon points="775.5,1695 792,1686.6 792,1703.4" fill="#000"/>
<text transform="translate(710.8,1676.7) scale(0.91,1)" text-anchor="middle" font-size="25" fill="#151515">See Data</text>
<text transform="translate(710.8,1703.3) scale(0.91,1)" text-anchor="middle" font-size="25" fill="#151515">Link Details</text>
<text transform="translate(710.8,1730) scale(0.91,1)" text-anchor="middle" font-size="25" fill="#2030f0">(SD200-3)</text>
<text transform="translate(859.7,1659.8) scale(0.91,1)" font-size="25" fill="#151515">JOINT</text>
<text transform="translate(859.7,1685.4) scale(0.91,1)" font-size="25" fill="#151515">CONNECTOR</text>
<rect x="863" y="1694.6" width="114.7" height="29" fill="none" stroke="#333" stroke-width="2"/>
<text transform="translate(867,1717.8) scale(0.91,1)" font-size="25" fill="#151515">PHOTO 1</text>
<polyline points="596.5,1747 609.5,1760 622.5,1747" stroke="#000" stroke-width="1.9" fill="none" stroke-linejoin="miter"/>
<polyline points="799.5,1747 812.5,1760 825.5,1747" stroke="#000" stroke-width="1.9" fill="none" stroke-linejoin="miter"/>
<line x1="615" y1="1760.4" x2="807" y2="1760.4" stroke="#111" stroke-width="1.9" stroke-dasharray="10 10"/>
<text transform="translate(602,1785.5) scale(0.91,1)" text-anchor="end" font-size="25" fill="#151515">8</text>
<text transform="translate(803.6,1785.5) scale(0.91,1)" text-anchor="end" font-size="25" fill="#151515">4</text>
<text transform="translate(820.5,1785.5) scale(0.91,1)" font-size="25" fill="#2030f0">JEC</text>
<text transform="translate(606.8,1824) scale(0.91,1)" text-anchor="end" font-size="25" fill="#151515">0.5G</text>
<text transform="translate(808.5,1824) scale(0.91,1)" text-anchor="end" font-size="25" fill="#151515">0.5O</text>
<rect x="1122.3" y="118" width="253.4" height="34.3" fill="none" stroke="#333" stroke-width="2"/>
<text transform="translate(1132.3,144.9) scale(0.91,1)" font-size="25" fill="#151515">HOT IN ON OR START</text>
<rect x="1513" y="118" width="217.6" height="34.3" fill="none" stroke="#333" stroke-width="2"/>
<text transform="translate(1519.5,144.9) scale(0.91,1)" font-size="25" fill="#151515">HOT AT ALL TIMES</text>
<rect x="1043.7" y="162.3" width="812.3" height="430.9" fill="#80cde3" stroke="#000" stroke-width="4.2" stroke-dasharray="9.5 10"/>
<line x1="1256.5" y1="162.3" x2="1256.5" y2="283.6" stroke="#10242a" stroke-width="1.6"/>
<circle cx="1256.5" cy="200" r="7.7" fill="#000"/>
<polygon points="1211.3,200 1229.4,187.2 1229.4,212.8" fill="#000"/>
<line x1="1229" y1="200" x2="1256.5" y2="200" stroke="#10242a" stroke-width="1.6"/>
<polyline points="1256.5,200 1395.8,200 1395.8,283.6" stroke="#10242a" stroke-width="1.6" fill="none" stroke-linejoin="miter"/>
<text transform="translate(1150.4,189.5) scale(0.91,1)" text-anchor="middle" font-size="25" fill="#151515">See Power</text>
<text transform="translate(1148.8,215.5) scale(0.91,1)" text-anchor="middle" font-size="25" fill="#151515">Distribution</text>
<text transform="translate(1146.5,240.6) scale(0.91,1)" text-anchor="middle" font-size="25" fill="#2030f0">(SD110-13)</text>
<polyline points="1243.5,255.8 1256.5,241.8 1269.5,255.8" stroke="#10242a" stroke-width="1.6" fill="none" stroke-linejoin="miter"/>
<polyline points="1243.5,271.1 1256.5,257.6 1269.5,271.1" stroke="#10242a" stroke-width="1.6" fill="none" stroke-linejoin="miter"/>
<path d="M1256.5,283.6 C1273.8,283.6 1273.8,315 1256.5,315 C1239.2,315 1239.2,346.4 1256.5,346.4" stroke="#10242a" stroke-width="1.6" fill="none"/>
<line x1="1256.5" y1="346.4" x2="1256.5" y2="593.2" stroke="#10242a" stroke-width="1.6"/>
<polyline points="1243.5,363.6 1256.5,376.6 1269.5,363.6" stroke="#10242a" stroke-width="1.6" fill="none" stroke-linejoin="miter"/>
<polyline points="1243.5,378.2 1256.5,391.7 1269.5,378.2" stroke="#10242a" stroke-width="1.6" fill="none" stroke-linejoin="miter"/>
<polyline points="1243.5,579.2 1256.5,593.2 1269.5,579.2" stroke="#10242a" stroke-width="1.6" fill="none" stroke-linejoin="miter"/>
<polyline points="1243.5,594 1256.5,607 1269.5,594" stroke="#000" stroke-width="1.9" fill="none" stroke-linejoin="miter"/>
<polyline points="1382.8,255.8 1395.8,241.8 1408.8,255.8" stroke="#10242a" stroke-width="1.6" fill="none" stroke-linejoin="miter"/>
<polyline points="1382.8,271.1 1395.8,257.6 1408.8,271.1" stroke="#10242a" stroke-width="1.6" fill="none" stroke-linejoin="miter"/>
<path d="M1395.8,283.6 C1413.1,283.6 1413.1,315 1395.8,315 C1378.5,315 1378.5,346.4 1395.8,346.4" stroke="#10242a" stroke-width="1.6" fill="none"/>
<line x1="1395.8" y1="346.4" x2="1395.8" y2="593.2" stroke="#10242a" stroke-width="1.6"/>
<polyline points="1382.8,363.6 1395.8,376.6 1408.8,363.6" stroke="#10242a" stroke-width="1.6" fill="none" stroke-linejoin="miter"/>
<polyline points="1382.8,378.2 1395.8,391.7 1408.8,378.2" stroke="#10242a" stroke-width="1.6" fill="none" stroke-linejoin="miter"/>
<polyline points="1382.8,579.2 1395.8,593.2 1408.8,579.2" stroke="#10242a" stroke-width="1.6" fill="none" stroke-linejoin="miter"/>
<polyline points="1382.8,594 1395.8,607 1408.8,594" stroke="#000" stroke-width="1.9" fill="none" stroke-linejoin="miter"/>
<text transform="translate(1277.6,310.4) scale(0.91,1)" font-size="25" fill="#151515">CRUISE</text>
<text transform="translate(1277.6,336.4) scale(0.91,1)" font-size="25" fill="#151515">SWITCH</text>
<text transform="translate(1277.6,362.4) scale(0.91,1)" font-size="25" fill="#151515">10A</text>
<text transform="translate(1416.3,310.4) scale(0.91,1)" font-size="25" fill="#151515">BODY</text>
<text transform="translate(1416.3,336.4) scale(0.91,1)" font-size="25" fill="#151515">UNIT 3</text>
<text transform="translate(1416.3,362.4) scale(0.91,1)" font-size="25" fill="#151515">10A</text>
<text transform="translate(1213.6,470) scale(0.91,1)" text-anchor="end" font-size="25" fill="#151515">See Passenger</text>
<text transform="translate(1213.6,495.2) scale(0.91,1)" text-anchor="end" font-size="25" fill="#151515">Compartment</text>
<text transform="translate(1213.6,520.4) scale(0.91,1)" text-anchor="end" font-size="25" fill="#151515">Fuse Details</text>
<text transform="translate(1213.6,545.5) scale(0.91,1)" text-anchor="end" font-size="25" fill="#2030f0">(SD120-5)</text>
<circle cx="1256.5" cy="501.8" r="7.5" fill="#000"/>
<line x1="1237" y1="501.8" x2="1256.5" y2="501.8" stroke="#10242a" stroke-width="1.6"/>
<polygon points="1219.4,501.8 1237.6,490.8 1237.6,512.8" fill="#000"/>
<circle cx="1395.8" cy="500.2" r="7.5" fill="#000"/>
<line x1="1395.8" y1="500.2" x2="1412" y2="500.2" stroke="#10242a" stroke-width="1.6"/>
<polygon points="1429.8,500.2 1411.2,489.2 1411.2,511.2" fill="#000"/>
<text transform="translate(1437.3,470) scale(0.91,1)" font-size="25" fill="#151515">See Passenger</text>
<text transform="translate(1437.3,495.2) scale(0.91,1)" font-size="25" fill="#151515">Compartment</text>
<text transform="translate(1437.3,520.4) scale(0.91,1)" font-size="25" fill="#151515">Fuse Details</text>
<text transform="translate(1437.3,545.5) scale(0.91,1)" font-size="25" fill="#2030f0">(SD120-6)</text>
<line x1="1619" y1="162.3" x2="1619" y2="413.8" stroke="#10242a" stroke-width="1.6"/>
<line x1="1619" y1="475.8" x2="1619" y2="593.2" stroke="#10242a" stroke-width="1.6"/>
<circle cx="1619" cy="191.4" r="7.5" fill="#000"/>
<line x1="1619" y1="191.4" x2="1665" y2="191.4" stroke="#10242a" stroke-width="1.6"/>
<polygon points="1680.4,191.4 1664.8,180.9 1664.8,201.9" fill="#000"/>
<text transform="translate(1689.2,189.5) scale(0.91,1)" font-size="25" fill="#151515">See Power</text>
<text transform="translate(1689.2,214.5) scale(0.91,1)" font-size="25" fill="#151515">Distribution</text>
<text transform="translate(1689.2,239.5) scale(0.91,1)" font-size="25" fill="#2030f0">(SD110-12)</text>
<polyline points="1606,233.7 1619,219.7 1632,233.7" stroke="#10242a" stroke-width="1.6" fill="none" stroke-linejoin="miter"/>
<polyline points="1606,246.5 1619,233 1632,246.5" stroke="#10242a" stroke-width="1.6" fill="none" stroke-linejoin="miter"/>
<rect x="1612.5" y="240.6" width="11.5" height="79.8" fill="#000"/>
<text transform="translate(1631.6,275.5) scale(0.91,1)" font-size="25" fill="#151515">P/CONN</text>
<text transform="translate(1631.6,301) scale(0.91,1)" font-size="25" fill="#151515">30A</text>
<polyline points="1606,315 1619,329 1632,315" stroke="#10242a" stroke-width="1.6" fill="none" stroke-linejoin="miter"/>
<polyline points="1606,329 1619,343 1632,329" stroke="#10242a" stroke-width="1.6" fill="none" stroke-linejoin="miter"/>
<circle cx="1619" cy="358" r="7.5" fill="#000"/>
<polyline points="1619,358 1747,358 1747,270" stroke="#10242a" stroke-width="1.6" fill="none" stroke-linejoin="miter"/>
<polygon points="1747,252.3 1736.5,270.9 1757.5,270.9" fill="#000"/>
<polyline points="1606,390.6 1619,376.6 1632,390.6" stroke="#10242a" stroke-width="1.6" fill="none" stroke-linejoin="miter"/>
<polyline points="1606,403.4 1619,389.4 1632,403.4" stroke="#10242a" stroke-width="1.6" fill="none" stroke-linejoin="miter"/>
<path d="M1619,413.8 C1636.3,413.8 1636.3,444.8 1619,444.8 C1601.7,444.8 1601.7,475.8 1619,475.8" stroke="#10242a" stroke-width="1.6" fill="none"/>
<text transform="translate(1639.2,432.4) scale(0.91,1)" font-size="25" fill="#151515">BODY</text>
<text transform="translate(1639.2,458.2) scale(0.91,1)" font-size="25" fill="#151515">UNIT 2</text>
<text transform="translate(1639.2,484) scale(0.91,1)" font-size="25" fill="#151515">10A</text>
<polyline points="1606,487.4 1619,501.4 1632,487.4" stroke="#10242a" stroke-width="1.6" fill="none" stroke-linejoin="miter"/>
<polyline points="1606,501 1619,514 1632,501" stroke="#10242a" stroke-width="1.6" fill="none" stroke-linejoin="miter"/>
<circle cx="1619" cy="546.7" r="7.5" fill="#000"/>
<line x1="1619" y1="546.7" x2="1661" y2="546.7" stroke="#10242a" stroke-width="1.6"/>
<polygon points="1676.4,546.7 1660,535.1 1660,558.3" fill="#000"/>
<text transform="translate(1685.7,502.5) scale(0.91,1)" font-size="25" fill="#151515">See Passenger</text>
<text transform="translate(1685.7,528.7) scale(0.91,1)" font-size="25" fill="#151515">Compartment</text>
<text transform="translate(1685.7,554.9) scale(0.91,1)" font-size="25" fill="#151515">Fuse Details</text>
<text transform="translate(1685.7,580) scale(0.91,1)" font-size="25" fill="#2030f0">(SD120-1)</text>
<polyline points="1606,579.2 1619,593.2 1632,579.2" stroke="#10242a" stroke-width="1.6" fill="none" stroke-linejoin="miter"/>
<polyline points="1606,594 1619,607 1632,594" stroke="#000" stroke-width="1.9" fill="none" stroke-linejoin="miter"/>
<text transform="translate(1865.9,183.7) scale(0.91,1)" font-size="25" fill="#151515">I/P</text>
<text transform="translate(1865.9,209.3) scale(0.91,1)" font-size="25" fill="#151515">JUNCTION</text>
<text transform="translate(1865.9,234.9) scale(0.91,1)" font-size="25" fill="#151515">BOX LH</text>
<rect x="1868.7" y="244.6" width="89.7" height="55.8" fill="none" stroke="#333" stroke-width="2"/>
<text transform="translate(1873,267) scale(0.91,1)" font-size="25" fill="#151515">PHOTO</text>
<text transform="translate(1873,292.5) scale(0.91,1)" font-size="25" fill="#151515">75</text>
<rect x="1999" y="167" width="304" height="171" fill="#4fb9d9"/>
<text transform="translate(2011,220) scale(0.91,1)" font-size="46.5" fill="#151515">With SCC</text>
<text transform="translate(2011,268) scale(0.91,1)" font-size="46.5" fill="#151515">(Smart Cruise</text>
<text transform="translate(2011,316) scale(0.91,1)" font-size="46.5" fill="#151515">Control)</text>
<text transform="translate(1249.7,630.4) scale(0.91,1)" text-anchor="end" font-size="25" fill="#151515">18</text>
<text transform="translate(1266,630.4) scale(0.91,1)" font-size="25" fill="#2030f0">I/P-LHC</text>
<text transform="translate(1389,630.4) scale(0.91,1)" text-anchor="end" font-size="25" fill="#151515">12</text>
<text transform="translate(1406.6,630.4) scale(0.91,1)" font-size="25" fill="#2030f0">I/P-LHG</text>
<text transform="translate(1611.3,630.4) scale(0.91,1)" text-anchor="end" font-size="25" fill="#151515">16</text>
<text transform="translate(1628.8,630.4) scale(0.91,1)" font-size="25" fill="#2030f0">I/P-LHF</text>
<text transform="translate(1250.8,673.4) scale(0.91,1)" text-anchor="end" font-size="25" fill="#151515">0.3Y/O</text>
<text transform="translate(1389,673.4) scale(0.91,1)" text-anchor="end" font-size="25" fill="#151515">0.3P/B</text>
<text transform="translate(1614.4,673.4) scale(0.91,1)" text-anchor="end" font-size="25" fill="#151515">0.5G/O</text>
<text transform="translate(1385.6,706) scale(0.91,1)" text-anchor="end" font-size="25" fill="#151515">7</text>
<text transform="translate(1610,706) scale(0.91,1)" text-anchor="end" font-size="25" fill="#151515">8</text>
<text transform="translate(1631,706) scale(0.91,1)" font-size="25" fill="#2030f0">M48</text>
<line x1="1256.5" y1="607" x2="1256.5" y2="1320" stroke="#000" stroke-width="4.3"/>
<line x1="1395.8" y1="607" x2="1395.8" y2="714" stroke="#000" stroke-width="4.3"/>
<line x1="1619" y1="607" x2="1619" y2="714" stroke="#000" stroke-width="4.3"/>
<line x1="1402" y1="711.7" x2="1613" y2="711.7" stroke="#111" stroke-width="1.9" stroke-dasharray="10 10"/>
<rect x="1316" y="727" width="660" height="128.6" fill="#80cde3" stroke="#000" stroke-width="4.2" stroke-dasharray="9.5 10"/>
<polyline points="1382.8,725.7 1395.8,714 1408.8,725.7" stroke="#000" stroke-width="1.9" fill="none" stroke-linejoin="miter"/>
<polyline points="1382.8,741.5 1395.8,727.5 1408.8,741.5" stroke="#10242a" stroke-width="1.6" fill="none" stroke-linejoin="miter"/>
<line x1="1395.8" y1="727" x2="1395.8" y2="754.4" stroke="#10242a" stroke-width="1.6"/>
<polyline points="1606,725.7 1619,714 1632,725.7" stroke="#000" stroke-width="1.9" fill="none" stroke-linejoin="miter"/>
<polyline points="1606,741.5 1619,727.5 1632,741.5" stroke="#10242a" stroke-width="1.6" fill="none" stroke-linejoin="miter"/>
<line x1="1619" y1="727" x2="1619" y2="754.4" stroke="#10242a" stroke-width="1.6"/>
<rect x="1347.3" y="754.4" width="596.7" height="70.3" fill="none" stroke="#000" stroke-width="4.2"/>
<text transform="translate(1645.6,801.7) scale(0.91,1)" text-anchor="middle" font-size="25" fill="#151515">M/F SW ECU</text>
<line x1="1441.5" y1="824.7" x2="1441.5" y2="855.6" stroke="#10242a" stroke-width="1.6"/>
<polyline points="1428.5,840.6 1441.5,855.6 1454.5,840.6" stroke="#10242a" stroke-width="1.6" fill="none" stroke-linejoin="miter"/>
<polyline points="1428.5,855.6 1441.5,869.5 1454.5,855.6" stroke="#000" stroke-width="1.9" fill="none" stroke-linejoin="miter"/>
<line x1="1601" y1="824.7" x2="1601" y2="855.6" stroke="#10242a" stroke-width="1.6"/>
<polyline points="1588,840.6 1601,855.6 1614,840.6" stroke="#10242a" stroke-width="1.6" fill="none" stroke-linejoin="miter"/>
<polyline points="1588,855.6 1601,869.5 1614,855.6" stroke="#000" stroke-width="1.9" fill="none" stroke-linejoin="miter"/>
<line x1="1723.5" y1="824.7" x2="1723.5" y2="855.6" stroke="#10242a" stroke-width="1.6"/>
<polyline points="1710.5,840.6 1723.5,855.6 1736.5,840.6" stroke="#10242a" stroke-width="1.6" fill="none" stroke-linejoin="miter"/>
<polyline points="1710.5,855.6 1723.5,869.5 1736.5,855.6" stroke="#000" stroke-width="1.9" fill="none" stroke-linejoin="miter"/>
<line x1="1802.5" y1="824.7" x2="1802.5" y2="855.6" stroke="#10242a" stroke-width="1.6"/>
<polyline points="1789.5,840.6 1802.5,855.6 1815.5,840.6" stroke="#10242a" stroke-width="1.6" fill="none" stroke-linejoin="miter"/>
<polyline points="1789.5,855.6 1802.5,869.5 1815.5,855.6" stroke="#000" stroke-width="1.9" fill="none" stroke-linejoin="miter"/>
<line x1="1905.9" y1="824.7" x2="1905.9" y2="855.6" stroke="#10242a" stroke-width="1.6"/>
<polyline points="1892.9,840.6 1905.9,855.6 1918.9,840.6" stroke="#10242a" stroke-width="1.6" fill="none" stroke-linejoin="miter"/>
<polyline points="1892.9,855.6 1905.9,869.5 1918.9,855.6" stroke="#000" stroke-width="1.9" fill="none" stroke-linejoin="miter"/>
<line x1="1447" y1="869.5" x2="1900" y2="869.5" stroke="#111" stroke-width="1.9" stroke-dasharray="10 10"/>
<text transform="translate(1983.7,743) scale(0.91,1)" font-size="25" fill="#151515">MULTIFUNCTION</text>
<text transform="translate(1983.7,769) scale(0.91,1)" font-size="25" fill="#151515">SWITCH</text>
<rect x="1985.8" y="776.6" width="87.9" height="56.4" fill="none" stroke="#333" stroke-width="2"/>
<text transform="translate(1990,800.4) scale(0.91,1)" font-size="25" fill="#151515">PHOTO</text>
<text transform="translate(1990,824.4) scale(0.91,1)" font-size="25" fill="#151515">56</text>
<text transform="translate(1431.4,895.8) scale(0.91,1)" text-anchor="end" font-size="25" fill="#151515">16</text>
<text transform="translate(1590.4,895.8) scale(0.91,1)" text-anchor="end" font-size="25" fill="#151515">14</text>
<text transform="translate(1713.4,895.8) scale(0.91,1)" text-anchor="end" font-size="25" fill="#151515">15</text>
<text transform="translate(1792,895.8) scale(0.91,1)" text-anchor="end" font-size="25" fill="#151515">6</text>
<text transform="translate(1895.9,895.8) scale(0.91,1)" text-anchor="end" font-size="25" fill="#151515">5</text>
<text transform="translate(1914.3,895.8) scale(0.91,1)" font-size="25" fill="#2030f0">M48</text>
<text transform="translate(1432.3,931.4) scale(0.91,1)" text-anchor="end" font-size="25" fill="#151515">0.5B</text>
<text transform="translate(1591.3,935.6) scale(0.91,1)" text-anchor="end" font-size="25" fill="#151515">0.3Y</text>
<text transform="translate(1716.8,935.6) scale(0.91,1)" text-anchor="end" font-size="25" fill="#151515">0.3W</text>
<text transform="translate(1796.3,935.6) scale(0.91,1)" text-anchor="end" font-size="25" fill="#151515">0.3W</text>
<text transform="translate(1898.8,935.6) scale(0.91,1)" text-anchor="end" font-size="25" fill="#151515">0.3Br</text>
<line x1="1601" y1="869.5" x2="1601" y2="1320" stroke="#000" stroke-width="4.3"/>
<line x1="1723.5" y1="869.5" x2="1723.5" y2="1320" stroke="#000" stroke-width="4.3"/>
<line x1="1802.5" y1="869.5" x2="1802.5" y2="961" stroke="#000" stroke-width="4.3"/>
<line x1="1905.9" y1="869.5" x2="1905.9" y2="961" stroke="#000" stroke-width="4.3"/>
<polygon points="1802.5,976 1790,959.4 1815,959.4" fill="#000"/>
<polygon points="1905.9,976 1893.4,959.4 1918.4,959.4" fill="#000"/>
<polyline points="1781.6,974 1794,984.5 1842.3,984.5 1854,997 1867.4,984.5 1917.6,984.5 1930,972.8" stroke="#000" stroke-width="1.8" fill="none" stroke-linejoin="miter"/>
<text transform="translate(1854,1028.4) scale(0.91,1)" text-anchor="middle" font-size="25" fill="#151515">See Data Link Details</text>
<text transform="translate(1854,1053.6) scale(0.91,1)" text-anchor="middle" font-size="25" fill="#2030f0">(SD200-5)</text>
<line x1="1441.5" y1="869.5" x2="1441.5" y2="984.5" stroke="#000" stroke-width="4.3"/>
<text transform="translate(1434.4,984.5) scale(0.91,1)" text-anchor="end" font-size="25" fill="#151515">3</text>
<text transform="translate(1449,984.5) scale(0.91,1)" font-size="25" fill="#2030f0">JMD</text>
<polyline points="1428.5,997 1441.5,984.5 1454.5,997" stroke="#000" stroke-width="1.9" fill="none" stroke-linejoin="miter"/>
<rect x="1269" y="997.7" width="200.6" height="90.6" fill="#80cde3" stroke="#000" stroke-width="4.2" stroke-dasharray="9.5 10"/>
<line x1="1441.5" y1="997.7" x2="1441.5" y2="1088.3" stroke="#10242a" stroke-width="1.6"/>
<polyline points="1428.5,1011.6 1441.5,999 1454.5,1011.6" stroke="#10242a" stroke-width="1.6" fill="none" stroke-linejoin="miter"/>
<polyline points="1428.5,1073 1441.5,1087 1454.5,1073" stroke="#10242a" stroke-width="1.6" fill="none" stroke-linejoin="miter"/>
<text transform="translate(1282.2,1023.6) scale(0.91,1)" font-size="25" fill="#151515">See Ground</text>
<text transform="translate(1402,1049.8) scale(0.91,1)" text-anchor="end" font-size="25" fill="#151515">Distribution</text>
<text transform="translate(1402,1074.4) scale(0.91,1)" text-anchor="end" font-size="25" fill="#2030f0">(SD130-2)</text>
<polygon points="1430,1042.3 1412,1031.7 1412,1052.9" fill="#000"/>
<line x1="1430" y1="1042.3" x2="1441.5" y2="1042.3" stroke="#000" stroke-width="1.8"/>
<circle cx="1441.5" cy="1042.3" r="6.7" fill="#000"/>
<text transform="translate(1475.2,1015.8) scale(0.91,1)" font-size="25" fill="#151515">JOINT</text>
<text transform="translate(1475.2,1040.2) scale(0.91,1)" font-size="25" fill="#151515">CONNEC-</text>
<text transform="translate(1475.2,1064.6) scale(0.91,1)" font-size="25" fill="#151515">TOR</text>
<polyline points="1428.5,1088 1441.5,1101 1454.5,1088" stroke="#000" stroke-width="1.9" fill="none" stroke-linejoin="miter"/>
<text transform="translate(1430.6,1120.4) scale(0.91,1)" text-anchor="end" font-size="25" fill="#151515">5</text>
<text transform="translate(1451.8,1120.4) scale(0.91,1)" font-size="25" fill="#2030f0">JMD</text>
<rect x="1454.6" y="1130" width="88.4" height="56.5" fill="none" stroke="#333" stroke-width="2"/>
<text transform="translate(1459,1152.5) scale(0.91,1)" font-size="25" fill="#151515">PHOTO</text>
<text transform="translate(1459,1177.6) scale(0.91,1)" font-size="25" fill="#151515">47</text>
<text transform="translate(1432.8,1166.4) scale(0.91,1)" text-anchor="end" font-size="25" fill="#151515">0.85B</text>
<line x1="1441.5" y1="1101" x2="1441.5" y2="1205" stroke="#000" stroke-width="4.3"/>
<ellipse cx="1441.5" cy="1217.9" rx="13.6" ry="14.3" fill="none" stroke="#000" stroke-width="3"/>
<ellipse cx="1441.5" cy="1219.4" rx="7.6" ry="7.8" fill="#000"/>
<line x1="1422" y1="1236.9" x2="1462" y2="1236.9" stroke="#000" stroke-width="4"/>
<line x1="1429" y1="1247.4" x2="1454" y2="1247.4" stroke="#000" stroke-width="4"/>
<line x1="1438" y1="1258.4" x2="1445" y2="1258.4" stroke="#000" stroke-width="4"/>
<rect x="1283.6" y="1262.6" width="124.1" height="32.1" fill="none" stroke="#333" stroke-width="2"/>
<text transform="translate(1288,1287.7) scale(0.91,1)" font-size="25" fill="#151515">PHOTO 46</text>
<text transform="translate(1412.7,1287.7) scale(0.91,1)" font-size="25" fill="#2030f0">GM01</text>
<text transform="translate(1148.9,1003.2) scale(0.91,1)" text-anchor="middle" font-size="25" fill="#151515">See Illuminations</text>
<text transform="translate(1148.9,1029.7) scale(0.91,1)" text-anchor="middle" font-size="25" fill="#2030f0">(SD941-2)</text>
<polyline points="1068.8,1063.8 1085.5,1052.6 1134.4,1052.6 1148.9,1041.5 1163.7,1052.6 1204,1052.6 1218.6,1066" stroke="#000" stroke-width="1.8" fill="none" stroke-linejoin="miter"/>
<polygon points="1101,1077 1090,1062.6 1112,1062.6" fill="#000"/>
<polygon points="1193,1061.8 1182,1080 1204,1080" fill="#000"/>
<line x1="1101" y1="1075" x2="1101" y2="1320" stroke="#000" stroke-width="4.3"/>
<line x1="1193" y1="1078" x2="1193" y2="1320" stroke="#000" stroke-width="4.3"/>
<text transform="translate(1095.3,1110.6) scale(0.91,1)" text-anchor="end" font-size="25" fill="#151515">0.3L/B</text>
<text transform="translate(1185,1110.6) scale(0.91,1)" text-anchor="end" font-size="25" fill="#151515">0.3R/B</text>
<text transform="translate(1879,1121.3) scale(0.91,1)" text-anchor="middle" font-size="25" fill="#151515">See Driver</text>
<text transform="translate(1879,1146.4) scale(0.91,1)" text-anchor="middle" font-size="25" fill="#151515">Information System (DIS)/</text>
<text transform="translate(1879,1171.6) scale(0.91,1)" text-anchor="middle" font-size="25" fill="#151515">See Audio</text>
<text transform="translate(1879,1198.9) scale(0.91,1)" text-anchor="middle" font-size="25" fill="#2030f0">(SD937-3) (SD961-2)</text>
<polyline points="1775,1233.8 1789.8,1221.6 1862.5,1221.6 1877.2,1210 1891.8,1221.6 1962.8,1221.6 1975,1233.8" stroke="#000" stroke-width="1.8" fill="none" stroke-linejoin="miter"/>
<polygon points="1803.7,1247 1794.3,1231 1813.1,1231" fill="#000"/>
<polygon points="1954,1231 1944.6,1251.3 1963.4,1251.3" fill="#000"/>
<line x1="1803.7" y1="1245" x2="1803.7" y2="1320" stroke="#000" stroke-width="4.3"/>
<line x1="1954" y1="1250" x2="1954" y2="1320" stroke="#000" stroke-width="4.3"/>
<text transform="translate(1798.5,1280) scale(0.91,1)" text-anchor="end" font-size="25" fill="#151515">0.3L/O</text>
<text transform="translate(1947.8,1280) scale(0.91,1)" text-anchor="end" font-size="25" fill="#151515">0.3W/B</text>
<text transform="translate(1091,1313.5) scale(0.91,1)" text-anchor="end" font-size="25" fill="#151515">8</text>
<text transform="translate(1182.3,1313.5) scale(0.91,1)" text-anchor="end" font-size="25" fill="#151515">9</text>
<text transform="translate(1244.5,1313.5) scale(0.91,1)" text-anchor="end" font-size="25" fill="#151515">2</text>
<text transform="translate(1594.6,1313.5) scale(0.91,1)" text-anchor="end" font-size="25" fill="#151515">4</text>
<text transform="translate(1719,1313.5) scale(0.91,1)" text-anchor="end" font-size="25" fill="#151515">3</text>
<text transform="translate(1799.5,1313.5) scale(0.91,1)" text-anchor="end" font-size="25" fill="#151515">5</text>
<text transform="translate(1948.8,1313.5) scale(0.91,1)" text-anchor="end" font-size="25" fill="#151515">6</text>
<text transform="translate(1961,1313.5) scale(0.91,1)" font-size="25" fill="#2030f0">M13</text>
<line x1="1107" y1="1318.6" x2="1948" y2="1318.6" stroke="#111" stroke-width="1.9" stroke-dasharray="10 10"/>
<rect x="1048.5" y="1332.6" width="1049.5" height="102.2" fill="#80cde3" stroke="#000" stroke-width="4.2" stroke-dasharray="9.5 10"/>
<polyline points="1088.3,1330.7 1101,1320 1113.7,1330.7" stroke="#000" stroke-width="1.9" fill="none" stroke-linejoin="miter"/>
<polyline points="1180.6,1330.7 1193.3,1320 1206,1330.7" stroke="#000" stroke-width="1.9" fill="none" stroke-linejoin="miter"/>
<polyline points="1244.3,1330.7 1257,1320 1269.7,1330.7" stroke="#000" stroke-width="1.9" fill="none" stroke-linejoin="miter"/>
<polyline points="1588.3,1330.7 1601,1320 1613.7,1330.7" stroke="#000" stroke-width="1.9" fill="none" stroke-linejoin="miter"/>
<polyline points="1710.8,1330.7 1723.5,1320 1736.2,1330.7" stroke="#000" stroke-width="1.9" fill="none" stroke-linejoin="miter"/>
<polyline points="1791,1330.7 1803.7,1320 1816.4,1330.7" stroke="#000" stroke-width="1.9" fill="none" stroke-linejoin="miter"/>
<polyline points="1941.3,1330.7 1954,1320 1966.7,1330.7" stroke="#000" stroke-width="1.9" fill="none" stroke-linejoin="miter"/>
<rect x="1075.3" y="1356.4" width="913" height="53.7" fill="none" stroke="#000" stroke-width="4"/>
<polyline points="1088.3,1347.7 1101,1332.7 1113.7,1347.7" stroke="#10242a" stroke-width="1.6" fill="none" stroke-linejoin="miter"/>
<line x1="1101" y1="1332.7" x2="1101" y2="1364.5" stroke="#10242a" stroke-width="1.6"/>
<path d="M1101.0,1364.2 L1102.2,1364.3 L1103.4,1364.5 L1104.6,1364.8 L1105.7,1365.3 L1106.9,1365.9 L1107.9,1366.6 L1108.9,1367.4 L1109.9,1368.3 L1110.8,1369.4 L1111.6,1370.5 L1112.3,1371.7 L1113.0,1373.0 L1113.5,1374.4 L1113.9,1375.8 L1114.3,1377.3 L1114.5,1378.8 L1114.7,1380.3 L1114.7,1381.8 L1114.6,1383.4 L1114.4,1384.9 L1114.1,1386.4 L1113.8,1387.8 L1113.3,1389.2 L1112.7,1390.5 L1112.0,1391.8 L1111.2,1393.0 L1110.4,1394.1 L1109.5,1395.1 L1108.5,1396.0 L1107.5,1396.8 L1106.4,1397.4 L1105.2,1398.0 L1104.1,1398.4 L1102.9,1398.6 L1101.7,1398.8 L1100.5,1398.8 L1099.3,1398.7 L1098.1,1398.4 L1096.9,1398.0 L1095.8,1397.5 L1094.7,1396.8 L1093.6,1396.1 L1092.6,1395.2 L1091.7,1394.2 L1090.8,1393.1 L1090.1,1391.9 L1089.4,1390.7 L1088.8,1389.4 L1088.3,1388.0 L1087.9,1386.5 L1087.6,1385.0 L1087.4,1383.5 L1087.3,1382.0 L1087.5,1380.5 L1087.9,1379.0 L1088.4,1377.7 L1088.9,1376.4 L1089.6,1375.2 L1090.3,1374.1 L1091.1,1373.1 L1091.9,1372.2 L1092.8,1371.5 L1093.7,1370.9 L1094.6,1370.4 L1095.5,1370.0 L1096.5,1369.7 L1097.4,1369.6 L1098.3,1369.5 L1099.2,1369.6 L1100.1,1369.8 L1100.9,1370.0 L1101.7,1370.2 L1102.5,1370.4 L1103.2,1370.8 L1103.9,1371.1 L1104.6,1371.6 L1105.2,1372.1 L1105.8,1372.7 L1106.4,1373.4 L1106.9,1374.1 L1107.3,1374.8 L1107.7,1375.6 L1108.0,1376.5 L1108.2,1377.3 L1108.4,1378.2 L1108.5,1379.0 L1108.6,1379.9 L1108.6,1380.7 L1108.5,1381.6 L1108.6,1382.4 L1108.6,1383.3 L1108.5,1384.2 L1108.4,1385.0 L1108.2,1385.9 L1107.9,1386.7 L1107.6,1387.5 L1107.2,1388.3 L1106.8,1389.1 L1106.3,1389.8 L1105.7,1390.4 L1105.1,1391.0 L1104.5,1391.5 L1103.8,1392.0 L1103.1,1392.3 L1102.3,1392.6 L1101.5,1392.8 L1100.7,1392.9 L1099.9,1392.8 L1099.2,1392.5 L1098.4,1392.2 L1097.7,1391.9 L1097.0,1391.4 L1096.4,1390.9 L1095.7,1390.3 L1095.2,1389.6 L1094.7,1388.9 L1094.2,1388.1 L1093.8,1387.3 L1093.5,1386.5 L1093.2,1385.6 L1093.0,1384.7 L1092.9,1383.8 L1092.8,1382.8 L1092.8,1381.9 L1092.9,1381.0 L1093.3,1380.2 L1093.7,1379.4 L1094.1,1378.7 L1094.6,1378.0 L1095.1,1377.5 L1095.6,1377.0 L1096.1,1376.7 L1096.7,1376.4 L1097.3,1376.2 L1097.8,1376.1 L1098.3,1376.0 L1098.8,1376.0 L1099.3,1376.1 L1099.8,1376.3 L1100.2,1376.5 L1100.6,1376.8 L1100.9,1377.1 L1101.2,1377.2 L1101.5,1377.3 L1101.8,1377.4 L1102.1,1377.5 L1102.4,1377.7 L1102.6,1377.9 L1102.8,1378.1 L1103.1,1378.3 L1103.3,1378.6 L1103.4,1378.9 L1103.6,1379.2 L1103.7,1379.5 L1103.8,1379.8 L1103.9,1380.1 L1104.0,1380.5 L1104.0,1380.8 L1104.0,1381.2 L1104.0,1381.5 L1101.0,1385.5" stroke="#10242a" stroke-width="1.6" fill="none"/>
<line x1="1101" y1="1385.5" x2="1101" y2="1434.8" stroke="#10242a" stroke-width="1.6"/>
<polyline points="1088.3,1419.7 1101,1433.7 1113.7,1419.7" stroke="#10242a" stroke-width="1.6" fill="none" stroke-linejoin="miter"/>
<polyline points="1088.3,1436.2 1101,1447.4 1113.7,1436.2" stroke="#000" stroke-width="1.9" fill="none" stroke-linejoin="miter"/>
<line x1="1101" y1="1447.4" x2="1101" y2="1488.3" stroke="#000" stroke-width="4.3"/>
<polyline points="1180.6,1347.7 1193.3,1332.7 1206,1347.7" stroke="#10242a" stroke-width="1.6" fill="none" stroke-linejoin="miter"/>
<line x1="1193.3" y1="1332.7" x2="1193.3" y2="1364.5" stroke="#10242a" stroke-width="1.6"/>
<path d="M1193.3,1364.2 L1194.5,1364.3 L1195.7,1364.5 L1196.9,1364.8 L1198.0,1365.3 L1199.2,1365.9 L1200.2,1366.6 L1201.2,1367.4 L1202.2,1368.3 L1203.1,1369.4 L1203.9,1370.5 L1204.6,1371.7 L1205.3,1373.0 L1205.8,1374.4 L1206.2,1375.8 L1206.6,1377.3 L1206.8,1378.8 L1207.0,1380.3 L1207.0,1381.8 L1206.9,1383.4 L1206.7,1384.9 L1206.4,1386.4 L1206.1,1387.8 L1205.6,1389.2 L1205.0,1390.5 L1204.3,1391.8 L1203.5,1393.0 L1202.7,1394.1 L1201.8,1395.1 L1200.8,1396.0 L1199.8,1396.8 L1198.7,1397.4 L1197.5,1398.0 L1196.4,1398.4 L1195.2,1398.6 L1194.0,1398.8 L1192.8,1398.8 L1191.6,1398.7 L1190.4,1398.4 L1189.2,1398.0 L1188.1,1397.5 L1187.0,1396.8 L1185.9,1396.1 L1184.9,1395.2 L1184.0,1394.2 L1183.1,1393.1 L1182.4,1391.9 L1181.7,1390.7 L1181.1,1389.4 L1180.6,1388.0 L1180.2,1386.5 L1179.9,1385.0 L1179.7,1383.5 L1179.6,1382.0 L1179.8,1380.5 L1180.2,1379.0 L1180.7,1377.7 L1181.2,1376.4 L1181.9,1375.2 L1182.6,1374.1 L1183.4,1373.1 L1184.2,1372.2 L1185.1,1371.5 L1186.0,1370.9 L1186.9,1370.4 L1187.8,1370.0 L1188.8,1369.7 L1189.7,1369.6 L1190.6,1369.5 L1191.5,1369.6 L1192.4,1369.8 L1193.2,1370.0 L1194.0,1370.2 L1194.8,1370.4 L1195.5,1370.8 L1196.2,1371.1 L1196.9,1371.6 L1197.5,1372.1 L1198.1,1372.7 L1198.7,1373.4 L1199.2,1374.1 L1199.6,1374.8 L1200.0,1375.6 L1200.3,1376.5 L1200.5,1377.3 L1200.7,1378.2 L1200.8,1379.0 L1200.9,1379.9 L1200.9,1380.7 L1200.8,1381.6 L1200.9,1382.4 L1200.9,1383.3 L1200.8,1384.2 L1200.7,1385.0 L1200.5,1385.9 L1200.2,1386.7 L1199.9,1387.5 L1199.5,1388.3 L1199.1,1389.1 L1198.6,1389.8 L1198.0,1390.4 L1197.4,1391.0 L1196.8,1391.5 L1196.1,1392.0 L1195.4,1392.3 L1194.6,1392.6 L1193.8,1392.8 L1193.0,1392.9 L1192.2,1392.8 L1191.5,1392.5 L1190.7,1392.2 L1190.0,1391.9 L1189.3,1391.4 L1188.7,1390.9 L1188.0,1390.3 L1187.5,1389.6 L1187.0,1388.9 L1186.5,1388.1 L1186.1,1387.3 L1185.8,1386.5 L1185.5,1385.6 L1185.3,1384.7 L1185.2,1383.8 L1185.1,1382.8 L1185.1,1381.9 L1185.2,1381.0 L1185.6,1380.2 L1186.0,1379.4 L1186.4,1378.7 L1186.9,1378.0 L1187.4,1377.5 L1187.9,1377.0 L1188.4,1376.7 L1189.0,1376.4 L1189.6,1376.2 L1190.1,1376.1 L1190.6,1376.0 L1191.1,1376.0 L1191.6,1376.1 L1192.1,1376.3 L1192.5,1376.5 L1192.9,1376.8 L1193.2,1377.1 L1193.5,1377.2 L1193.8,1377.3 L1194.1,1377.4 L1194.4,1377.5 L1194.7,1377.7 L1194.9,1377.9 L1195.1,1378.1 L1195.4,1378.3 L1195.6,1378.6 L1195.7,1378.9 L1195.9,1379.2 L1196.0,1379.5 L1196.1,1379.8 L1196.2,1380.1 L1196.3,1380.5 L1196.3,1380.8 L1196.3,1381.2 L1196.3,1381.5 L1193.3,1385.5" stroke="#10242a" stroke-width="1.6" fill="none"/>
<line x1="1193.3" y1="1385.5" x2="1193.3" y2="1434.8" stroke="#10242a" stroke-width="1.6"/>
<polyline points="1180.6,1419.7 1193.3,1433.7 1206,1419.7" stroke="#10242a" stroke-width="1.6" fill="none" stroke-linejoin="miter"/>
<polyline points="1180.6,1436.2 1193.3,1447.4 1206,1436.2" stroke="#000" stroke-width="1.9" fill="none" stroke-linejoin="miter"/>
<line x1="1193.3" y1="1447.4" x2="1193.3" y2="1488.3" stroke="#000" stroke-width="4.3"/>
<polyline points="1244.3,1347.7 1257,1332.7 1269.7,1347.7" stroke="#10242a" stroke-width="1.6" fill="none" stroke-linejoin="miter"/>
<line x1="1257" y1="1332.7" x2="1257" y2="1364.5" stroke="#10242a" stroke-width="1.6"/>
<path d="M1257.0,1364.2 L1258.2,1364.3 L1259.4,1364.5 L1260.6,1364.8 L1261.7,1365.3 L1262.9,1365.9 L1263.9,1366.6 L1264.9,1367.4 L1265.9,1368.3 L1266.8,1369.4 L1267.6,1370.5 L1268.3,1371.7 L1269.0,1373.0 L1269.5,1374.4 L1269.9,1375.8 L1270.3,1377.3 L1270.5,1378.8 L1270.7,1380.3 L1270.7,1381.8 L1270.6,1383.4 L1270.4,1384.9 L1270.1,1386.4 L1269.8,1387.8 L1269.3,1389.2 L1268.7,1390.5 L1268.0,1391.8 L1267.2,1393.0 L1266.4,1394.1 L1265.5,1395.1 L1264.5,1396.0 L1263.5,1396.8 L1262.4,1397.4 L1261.2,1398.0 L1260.1,1398.4 L1258.9,1398.6 L1257.7,1398.8 L1256.5,1398.8 L1255.3,1398.7 L1254.1,1398.4 L1252.9,1398.0 L1251.8,1397.5 L1250.7,1396.8 L1249.6,1396.1 L1248.6,1395.2 L1247.7,1394.2 L1246.8,1393.1 L1246.1,1391.9 L1245.4,1390.7 L1244.8,1389.4 L1244.3,1388.0 L1243.9,1386.5 L1243.6,1385.0 L1243.4,1383.5 L1243.3,1382.0 L1243.5,1380.5 L1243.9,1379.0 L1244.4,1377.7 L1244.9,1376.4 L1245.6,1375.2 L1246.3,1374.1 L1247.1,1373.1 L1247.9,1372.2 L1248.8,1371.5 L1249.7,1370.9 L1250.6,1370.4 L1251.5,1370.0 L1252.5,1369.7 L1253.4,1369.6 L1254.3,1369.5 L1255.2,1369.6 L1256.1,1369.8 L1256.9,1370.0 L1257.7,1370.2 L1258.5,1370.4 L1259.2,1370.8 L1259.9,1371.1 L1260.6,1371.6 L1261.2,1372.1 L1261.8,1372.7 L1262.4,1373.4 L1262.9,1374.1 L1263.3,1374.8 L1263.7,1375.6 L1264.0,1376.5 L1264.2,1377.3 L1264.4,1378.2 L1264.5,1379.0 L1264.6,1379.9 L1264.6,1380.7 L1264.5,1381.6 L1264.6,1382.4 L1264.6,1383.3 L1264.5,1384.2 L1264.4,1385.0 L1264.2,1385.9 L1263.9,1386.7 L1263.6,1387.5 L1263.2,1388.3 L1262.8,1389.1 L1262.3,1389.8 L1261.7,1390.4 L1261.1,1391.0 L1260.5,1391.5 L1259.8,1392.0 L1259.1,1392.3 L1258.3,1392.6 L1257.5,1392.8 L1256.7,1392.9 L1255.9,1392.8 L1255.2,1392.5 L1254.4,1392.2 L1253.7,1391.9 L1253.0,1391.4 L1252.4,1390.9 L1251.7,1390.3 L1251.2,1389.6 L1250.7,1388.9 L1250.2,1388.1 L1249.8,1387.3 L1249.5,1386.5 L1249.2,1385.6 L1249.0,1384.7 L1248.9,1383.8 L1248.8,1382.8 L1248.8,1381.9 L1248.9,1381.0 L1249.3,1380.2 L1249.7,1379.4 L1250.1,1378.7 L1250.6,1378.0 L1251.1,1377.5 L1251.6,1377.0 L1252.1,1376.7 L1252.7,1376.4 L1253.3,1376.2 L1253.8,1376.1 L1254.3,1376.0 L1254.8,1376.0 L1255.3,1376.1 L1255.8,1376.3 L1256.2,1376.5 L1256.6,1376.8 L1256.9,1377.1 L1257.2,1377.2 L1257.5,1377.3 L1257.8,1377.4 L1258.1,1377.5 L1258.4,1377.7 L1258.6,1377.9 L1258.8,1378.1 L1259.1,1378.3 L1259.3,1378.6 L1259.4,1378.9 L1259.6,1379.2 L1259.7,1379.5 L1259.8,1379.8 L1259.9,1380.1 L1260.0,1380.5 L1260.0,1380.8 L1260.0,1381.2 L1260.0,1381.5 L1257.0,1385.5" stroke="#10242a" stroke-width="1.6" fill="none"/>
<line x1="1257" y1="1385.5" x2="1257" y2="1434.8" stroke="#10242a" stroke-width="1.6"/>
<polyline points="1244.3,1419.7 1257,1433.7 1269.7,1419.7" stroke="#10242a" stroke-width="1.6" fill="none" stroke-linejoin="miter"/>
<polyline points="1244.3,1436.2 1257,1447.4 1269.7,1436.2" stroke="#000" stroke-width="1.9" fill="none" stroke-linejoin="miter"/>
<line x1="1257" y1="1447.4" x2="1257" y2="1488.3" stroke="#000" stroke-width="4.3"/>
<polyline points="1588.3,1347.7 1601,1332.7 1613.7,1347.7" stroke="#10242a" stroke-width="1.6" fill="none" stroke-linejoin="miter"/>
<line x1="1601" y1="1332.7" x2="1601" y2="1364.5" stroke="#10242a" stroke-width="1.6"/>
<path d="M1601.0,1364.2 L1602.2,1364.3 L1603.4,1364.5 L1604.6,1364.8 L1605.7,1365.3 L1606.9,1365.9 L1607.9,1366.6 L1608.9,1367.4 L1609.9,1368.3 L1610.8,1369.4 L1611.6,1370.5 L1612.3,1371.7 L1613.0,1373.0 L1613.5,1374.4 L1613.9,1375.8 L1614.3,1377.3 L1614.5,1378.8 L1614.7,1380.3 L1614.7,1381.8 L1614.6,1383.4 L1614.4,1384.9 L1614.1,1386.4 L1613.8,1387.8 L1613.3,1389.2 L1612.7,1390.5 L1612.0,1391.8 L1611.2,1393.0 L1610.4,1394.1 L1609.5,1395.1 L1608.5,1396.0 L1607.5,1396.8 L1606.4,1397.4 L1605.2,1398.0 L1604.1,1398.4 L1602.9,1398.6 L1601.7,1398.8 L1600.5,1398.8 L1599.3,1398.7 L1598.1,1398.4 L1596.9,1398.0 L1595.8,1397.5 L1594.7,1396.8 L1593.6,1396.1 L1592.6,1395.2 L1591.7,1394.2 L1590.8,1393.1 L1590.1,1391.9 L1589.4,1390.7 L1588.8,1389.4 L1588.3,1388.0 L1587.9,1386.5 L1587.6,1385.0 L1587.4,1383.5 L1587.3,1382.0 L1587.5,1380.5 L1587.9,1379.0 L1588.4,1377.7 L1588.9,1376.4 L1589.6,1375.2 L1590.3,1374.1 L1591.1,1373.1 L1591.9,1372.2 L1592.8,1371.5 L1593.7,1370.9 L1594.6,1370.4 L1595.5,1370.0 L1596.5,1369.7 L1597.4,1369.6 L1598.3,1369.5 L1599.2,1369.6 L1600.1,1369.8 L1600.9,1370.0 L1601.7,1370.2 L1602.5,1370.4 L1603.2,1370.8 L1603.9,1371.1 L1604.6,1371.6 L1605.2,1372.1 L1605.8,1372.7 L1606.4,1373.4 L1606.9,1374.1 L1607.3,1374.8 L1607.7,1375.6 L1608.0,1376.5 L1608.2,1377.3 L1608.4,1378.2 L1608.5,1379.0 L1608.6,1379.9 L1608.6,1380.7 L1608.5,1381.6 L1608.6,1382.4 L1608.6,1383.3 L1608.5,1384.2 L1608.4,1385.0 L1608.2,1385.9 L1607.9,1386.7 L1607.6,1387.5 L1607.2,1388.3 L1606.8,1389.1 L1606.3,1389.8 L1605.7,1390.4 L1605.1,1391.0 L1604.5,1391.5 L1603.8,1392.0 L1603.1,1392.3 L1602.3,1392.6 L1601.5,1392.8 L1600.7,1392.9 L1599.9,1392.8 L1599.2,1392.5 L1598.4,1392.2 L1597.7,1391.9 L1597.0,1391.4 L1596.4,1390.9 L1595.7,1390.3 L1595.2,1389.6 L1594.7,1388.9 L1594.2,1388.1 L1593.8,1387.3 L1593.5,1386.5 L1593.2,1385.6 L1593.0,1384.7 L1592.9,1383.8 L1592.8,1382.8 L1592.8,1381.9 L1592.9,1381.0 L1593.3,1380.2 L1593.7,1379.4 L1594.1,1378.7 L1594.6,1378.0 L1595.1,1377.5 L1595.6,1377.0 L1596.1,1376.7 L1596.7,1376.4 L1597.3,1376.2 L1597.8,1376.1 L1598.3,1376.0 L1598.8,1376.0 L1599.3,1376.1 L1599.8,1376.3 L1600.2,1376.5 L1600.6,1376.8 L1600.9,1377.1 L1601.2,1377.2 L1601.5,1377.3 L1601.8,1377.4 L1602.1,1377.5 L1602.4,1377.7 L1602.6,1377.9 L1602.8,1378.1 L1603.1,1378.3 L1603.3,1378.6 L1603.4,1378.9 L1603.6,1379.2 L1603.7,1379.5 L1603.8,1379.8 L1603.9,1380.1 L1604.0,1380.5 L1604.0,1380.8 L1604.0,1381.2 L1604.0,1381.5 L1601.0,1385.5" stroke="#10242a" stroke-width="1.6" fill="none"/>
<line x1="1601" y1="1385.5" x2="1601" y2="1434.8" stroke="#10242a" stroke-width="1.6"/>
<polyline points="1588.3,1419.7 1601,1433.7 1613.7,1419.7" stroke="#10242a" stroke-width="1.6" fill="none" stroke-linejoin="miter"/>
<polyline points="1588.3,1436.2 1601,1447.4 1613.7,1436.2" stroke="#000" stroke-width="1.9" fill="none" stroke-linejoin="miter"/>
<line x1="1601" y1="1447.4" x2="1601" y2="1488.3" stroke="#000" stroke-width="4.3"/>
<polyline points="1710.8,1347.7 1723.5,1332.7 1736.2,1347.7" stroke="#10242a" stroke-width="1.6" fill="none" stroke-linejoin="miter"/>
<line x1="1723.5" y1="1332.7" x2="1723.5" y2="1364.5" stroke="#10242a" stroke-width="1.6"/>
<path d="M1723.5,1364.2 L1724.7,1364.3 L1725.9,1364.5 L1727.1,1364.8 L1728.2,1365.3 L1729.4,1365.9 L1730.4,1366.6 L1731.4,1367.4 L1732.4,1368.3 L1733.3,1369.4 L1734.1,1370.5 L1734.8,1371.7 L1735.5,1373.0 L1736.0,1374.4 L1736.4,1375.8 L1736.8,1377.3 L1737.0,1378.8 L1737.2,1380.3 L1737.2,1381.8 L1737.1,1383.4 L1736.9,1384.9 L1736.6,1386.4 L1736.3,1387.8 L1735.8,1389.2 L1735.2,1390.5 L1734.5,1391.8 L1733.7,1393.0 L1732.9,1394.1 L1732.0,1395.1 L1731.0,1396.0 L1730.0,1396.8 L1728.9,1397.4 L1727.7,1398.0 L1726.6,1398.4 L1725.4,1398.6 L1724.2,1398.8 L1723.0,1398.8 L1721.8,1398.7 L1720.6,1398.4 L1719.4,1398.0 L1718.3,1397.5 L1717.2,1396.8 L1716.1,1396.1 L1715.1,1395.2 L1714.2,1394.2 L1713.3,1393.1 L1712.6,1391.9 L1711.9,1390.7 L1711.3,1389.4 L1710.8,1388.0 L1710.4,1386.5 L1710.1,1385.0 L1709.9,1383.5 L1709.8,1382.0 L1710.0,1380.5 L1710.4,1379.0 L1710.9,1377.7 L1711.4,1376.4 L1712.1,1375.2 L1712.8,1374.1 L1713.6,1373.1 L1714.4,1372.2 L1715.3,1371.5 L1716.2,1370.9 L1717.1,1370.4 L1718.0,1370.0 L1719.0,1369.7 L1719.9,1369.6 L1720.8,1369.5 L1721.7,1369.6 L1722.6,1369.8 L1723.4,1370.0 L1724.2,1370.2 L1725.0,1370.4 L1725.7,1370.8 L1726.4,1371.1 L1727.1,1371.6 L1727.7,1372.1 L1728.3,1372.7 L1728.9,1373.4 L1729.4,1374.1 L1729.8,1374.8 L1730.2,1375.6 L1730.5,1376.5 L1730.7,1377.3 L1730.9,1378.2 L1731.0,1379.0 L1731.1,1379.9 L1731.1,1380.7 L1731.0,1381.6 L1731.1,1382.4 L1731.1,1383.3 L1731.0,1384.2 L1730.9,1385.0 L1730.7,1385.9 L1730.4,1386.7 L1730.1,1387.5 L1729.7,1388.3 L1729.3,1389.1 L1728.8,1389.8 L1728.2,1390.4 L1727.6,1391.0 L1727.0,1391.5 L1726.3,1392.0 L1725.6,1392.3 L1724.8,1392.6 L1724.0,1392.8 L1723.2,1392.9 L1722.4,1392.8 L1721.7,1392.5 L1720.9,1392.2 L1720.2,1391.9 L1719.5,1391.4 L1718.9,1390.9 L1718.2,1390.3 L1717.7,1389.6 L1717.2,1388.9 L1716.7,1388.1 L1716.3,1387.3 L1716.0,1386.5 L1715.7,1385.6 L1715.5,1384.7 L1715.4,1383.8 L1715.3,1382.8 L1715.3,1381.9 L1715.4,1381.0 L1715.8,1380.2 L1716.2,1379.4 L1716.6,1378.7 L1717.1,1378.0 L1717.6,1377.5 L1718.1,1377.0 L1718.6,1376.7 L1719.2,1376.4 L1719.8,1376.2 L1720.3,1376.1 L1720.8,1376.0 L1721.3,1376.0 L1721.8,1376.1 L1722.3,1376.3 L1722.7,1376.5 L1723.1,1376.8 L1723.4,1377.1 L1723.7,1377.2 L1724.0,1377.3 L1724.3,1377.4 L1724.6,1377.5 L1724.9,1377.7 L1725.1,1377.9 L1725.3,1378.1 L1725.6,1378.3 L1725.8,1378.6 L1725.9,1378.9 L1726.1,1379.2 L1726.2,1379.5 L1726.3,1379.8 L1726.4,1380.1 L1726.5,1380.5 L1726.5,1380.8 L1726.5,1381.2 L1726.5,1381.5 L1723.5,1385.5" stroke="#10242a" stroke-width="1.6" fill="none"/>
<line x1="1723.5" y1="1385.5" x2="1723.5" y2="1434.8" stroke="#10242a" stroke-width="1.6"/>
<polyline points="1710.8,1419.7 1723.5,1433.7 1736.2,1419.7" stroke="#10242a" stroke-width="1.6" fill="none" stroke-linejoin="miter"/>
<polyline points="1710.8,1436.2 1723.5,1447.4 1736.2,1436.2" stroke="#000" stroke-width="1.9" fill="none" stroke-linejoin="miter"/>
<line x1="1723.5" y1="1447.4" x2="1723.5" y2="1488.3" stroke="#000" stroke-width="4.3"/>
<polyline points="1791,1347.7 1803.7,1332.7 1816.4,1347.7" stroke="#10242a" stroke-width="1.6" fill="none" stroke-linejoin="miter"/>
<line x1="1803.7" y1="1332.7" x2="1803.7" y2="1364.5" stroke="#10242a" stroke-width="1.6"/>
<path d="M1803.7,1364.2 L1804.9,1364.3 L1806.1,1364.5 L1807.3,1364.8 L1808.4,1365.3 L1809.6,1365.9 L1810.6,1366.6 L1811.6,1367.4 L1812.6,1368.3 L1813.5,1369.4 L1814.3,1370.5 L1815.0,1371.7 L1815.7,1373.0 L1816.2,1374.4 L1816.6,1375.8 L1817.0,1377.3 L1817.2,1378.8 L1817.4,1380.3 L1817.4,1381.8 L1817.3,1383.4 L1817.1,1384.9 L1816.8,1386.4 L1816.5,1387.8 L1816.0,1389.2 L1815.4,1390.5 L1814.7,1391.8 L1813.9,1393.0 L1813.1,1394.1 L1812.2,1395.1 L1811.2,1396.0 L1810.2,1396.8 L1809.1,1397.4 L1807.9,1398.0 L1806.8,1398.4 L1805.6,1398.6 L1804.4,1398.8 L1803.2,1398.8 L1802.0,1398.7 L1800.8,1398.4 L1799.6,1398.0 L1798.5,1397.5 L1797.4,1396.8 L1796.3,1396.1 L1795.3,1395.2 L1794.4,1394.2 L1793.5,1393.1 L1792.8,1391.9 L1792.1,1390.7 L1791.5,1389.4 L1791.0,1388.0 L1790.6,1386.5 L1790.3,1385.0 L1790.1,1383.5 L1790.0,1382.0 L1790.2,1380.5 L1790.6,1379.0 L1791.1,1377.7 L1791.6,1376.4 L1792.3,1375.2 L1793.0,1374.1 L1793.8,1373.1 L1794.6,1372.2 L1795.5,1371.5 L1796.4,1370.9 L1797.3,1370.4 L1798.2,1370.0 L1799.2,1369.7 L1800.1,1369.6 L1801.0,1369.5 L1801.9,1369.6 L1802.8,1369.8 L1803.6,1370.0 L1804.4,1370.2 L1805.2,1370.4 L1805.9,1370.8 L1806.6,1371.1 L1807.3,1371.6 L1807.9,1372.1 L1808.5,1372.7 L1809.1,1373.4 L1809.6,1374.1 L1810.0,1374.8 L1810.4,1375.6 L1810.7,1376.5 L1810.9,1377.3 L1811.1,1378.2 L1811.2,1379.0 L1811.3,1379.9 L1811.3,1380.7 L1811.2,1381.6 L1811.3,1382.4 L1811.3,1383.3 L1811.2,1384.2 L1811.1,1385.0 L1810.9,1385.9 L1810.6,1386.7 L1810.3,1387.5 L1809.9,1388.3 L1809.5,1389.1 L1809.0,1389.8 L1808.4,1390.4 L1807.8,1391.0 L1807.2,1391.5 L1806.5,1392.0 L1805.8,1392.3 L1805.0,1392.6 L1804.2,1392.8 L1803.4,1392.9 L1802.6,1392.8 L1801.9,1392.5 L1801.1,1392.2 L1800.4,1391.9 L1799.7,1391.4 L1799.1,1390.9 L1798.4,1390.3 L1797.9,1389.6 L1797.4,1388.9 L1796.9,1388.1 L1796.5,1387.3 L1796.2,1386.5 L1795.9,1385.6 L1795.7,1384.7 L1795.6,1383.8 L1795.5,1382.8 L1795.5,1381.9 L1795.6,1381.0 L1796.0,1380.2 L1796.4,1379.4 L1796.8,1378.7 L1797.3,1378.0 L1797.8,1377.5 L1798.3,1377.0 L1798.8,1376.7 L1799.4,1376.4 L1800.0,1376.2 L1800.5,1376.1 L1801.0,1376.0 L1801.5,1376.0 L1802.0,1376.1 L1802.5,1376.3 L1802.9,1376.5 L1803.3,1376.8 L1803.6,1377.1 L1803.9,1377.2 L1804.2,1377.3 L1804.5,1377.4 L1804.8,1377.5 L1805.1,1377.7 L1805.3,1377.9 L1805.5,1378.1 L1805.8,1378.3 L1806.0,1378.6 L1806.1,1378.9 L1806.3,1379.2 L1806.4,1379.5 L1806.5,1379.8 L1806.6,1380.1 L1806.7,1380.5 L1806.7,1380.8 L1806.7,1381.2 L1806.7,1381.5 L1803.7,1385.5" stroke="#10242a" stroke-width="1.6" fill="none"/>
<line x1="1803.7" y1="1385.5" x2="1803.7" y2="1434.8" stroke="#10242a" stroke-width="1.6"/>
<polyline points="1791,1419.7 1803.7,1433.7 1816.4,1419.7" stroke="#10242a" stroke-width="1.6" fill="none" stroke-linejoin="miter"/>
<polyline points="1791,1436.2 1803.7,1447.4 1816.4,1436.2" stroke="#000" stroke-width="1.9" fill="none" stroke-linejoin="miter"/>
<line x1="1803.7" y1="1447.4" x2="1803.7" y2="1488.3" stroke="#000" stroke-width="4.3"/>
<polyline points="1941.3,1347.7 1954,1332.7 1966.7,1347.7" stroke="#10242a" stroke-width="1.6" fill="none" stroke-linejoin="miter"/>
<line x1="1954" y1="1332.7" x2="1954" y2="1364.5" stroke="#10242a" stroke-width="1.6"/>
<path d="M1954.0,1364.2 L1955.2,1364.3 L1956.4,1364.5 L1957.6,1364.8 L1958.7,1365.3 L1959.9,1365.9 L1960.9,1366.6 L1961.9,1367.4 L1962.9,1368.3 L1963.8,1369.4 L1964.6,1370.5 L1965.3,1371.7 L1966.0,1373.0 L1966.5,1374.4 L1966.9,1375.8 L1967.3,1377.3 L1967.5,1378.8 L1967.7,1380.3 L1967.7,1381.8 L1967.6,1383.4 L1967.4,1384.9 L1967.1,1386.4 L1966.8,1387.8 L1966.3,1389.2 L1965.7,1390.5 L1965.0,1391.8 L1964.2,1393.0 L1963.4,1394.1 L1962.5,1395.1 L1961.5,1396.0 L1960.5,1396.8 L1959.4,1397.4 L1958.2,1398.0 L1957.1,1398.4 L1955.9,1398.6 L1954.7,1398.8 L1953.5,1398.8 L1952.3,1398.7 L1951.1,1398.4 L1949.9,1398.0 L1948.8,1397.5 L1947.7,1396.8 L1946.6,1396.1 L1945.6,1395.2 L1944.7,1394.2 L1943.8,1393.1 L1943.1,1391.9 L1942.4,1390.7 L1941.8,1389.4 L1941.3,1388.0 L1940.9,1386.5 L1940.6,1385.0 L1940.4,1383.5 L1940.3,1382.0 L1940.5,1380.5 L1940.9,1379.0 L1941.4,1377.7 L1941.9,1376.4 L1942.6,1375.2 L1943.3,1374.1 L1944.1,1373.1 L1944.9,1372.2 L1945.8,1371.5 L1946.7,1370.9 L1947.6,1370.4 L1948.5,1370.0 L1949.5,1369.7 L1950.4,1369.6 L1951.3,1369.5 L1952.2,1369.6 L1953.1,1369.8 L1953.9,1370.0 L1954.7,1370.2 L1955.5,1370.4 L1956.2,1370.8 L1956.9,1371.1 L1957.6,1371.6 L1958.2,1372.1 L1958.8,1372.7 L1959.4,1373.4 L1959.9,1374.1 L1960.3,1374.8 L1960.7,1375.6 L1961.0,1376.5 L1961.2,1377.3 L1961.4,1378.2 L1961.5,1379.0 L1961.6,1379.9 L1961.6,1380.7 L1961.5,1381.6 L1961.6,1382.4 L1961.6,1383.3 L1961.5,1384.2 L1961.4,1385.0 L1961.2,1385.9 L1960.9,1386.7 L1960.6,1387.5 L1960.2,1388.3 L1959.8,1389.1 L1959.3,1389.8 L1958.7,1390.4 L1958.1,1391.0 L1957.5,1391.5 L1956.8,1392.0 L1956.1,1392.3 L1955.3,1392.6 L1954.5,1392.8 L1953.7,1392.9 L1952.9,1392.8 L1952.2,1392.5 L1951.4,1392.2 L1950.7,1391.9 L1950.0,1391.4 L1949.4,1390.9 L1948.7,1390.3 L1948.2,1389.6 L1947.7,1388.9 L1947.2,1388.1 L1946.8,1387.3 L1946.5,1386.5 L1946.2,1385.6 L1946.0,1384.7 L1945.9,1383.8 L1945.8,1382.8 L1945.8,1381.9 L1945.9,1381.0 L1946.3,1380.2 L1946.7,1379.4 L1947.1,1378.7 L1947.6,1378.0 L1948.1,1377.5 L1948.6,1377.0 L1949.1,1376.7 L1949.7,1376.4 L1950.3,1376.2 L1950.8,1376.1 L1951.3,1376.0 L1951.8,1376.0 L1952.3,1376.1 L1952.8,1376.3 L1953.2,1376.5 L1953.6,1376.8 L1953.9,1377.1 L1954.2,1377.2 L1954.5,1377.3 L1954.8,1377.4 L1955.1,1377.5 L1955.4,1377.7 L1955.6,1377.9 L1955.8,1378.1 L1956.1,1378.3 L1956.3,1378.6 L1956.4,1378.9 L1956.6,1379.2 L1956.7,1379.5 L1956.8,1379.8 L1956.9,1380.1 L1957.0,1380.5 L1957.0,1380.8 L1957.0,1381.2 L1957.0,1381.5 L1954.0,1385.5" stroke="#10242a" stroke-width="1.6" fill="none"/>
<line x1="1954" y1="1385.5" x2="1954" y2="1434.8" stroke="#10242a" stroke-width="1.6"/>
<polyline points="1941.3,1419.7 1954,1433.7 1966.7,1419.7" stroke="#10242a" stroke-width="1.6" fill="none" stroke-linejoin="miter"/>
<polyline points="1941.3,1436.2 1954,1447.4 1966.7,1436.2" stroke="#000" stroke-width="1.9" fill="none" stroke-linejoin="miter"/>
<line x1="1954" y1="1447.4" x2="1954" y2="1488.3" stroke="#000" stroke-width="4.3"/>
<text transform="translate(1994.3,1372) scale(0.91,1)" font-size="25" fill="#151515">CLOCK</text>
<text transform="translate(1994.3,1396.4) scale(0.91,1)" font-size="25" fill="#151515">SPRING</text>
<text transform="translate(2104.4,1352.7) scale(0.91,1)" font-size="25" fill="#151515">MULTIFUNCTION</text>
<text transform="translate(2104.4,1377.2) scale(0.91,1)" font-size="25" fill="#151515">SWITCH</text>
<rect x="2106" y="1389.4" width="88.6" height="55.9" fill="none" stroke="#333" stroke-width="2"/>
<text transform="translate(2110,1413.9) scale(0.91,1)" font-size="25" fill="#151515">PHOTO</text>
<text transform="translate(2110,1437.3) scale(0.91,1)" font-size="25" fill="#151515">56</text>
<line x1="1107" y1="1449.3" x2="1948" y2="1449.3" stroke="#111" stroke-width="1.9" stroke-dasharray="10 10"/>
<rect x="1047.7" y="1488.3" width="1262.3" height="325.6" fill="#80cde3" stroke="#000" stroke-width="4.2" stroke-dasharray="9.5 10"/>
<text transform="translate(1515,1850.7) scale(0.91,1)" font-size="25" fill="#151515">STEERING WHEEL</text>
<line x1="1101.2" y1="1488.3" x2="1101.2" y2="1641" stroke="#10242a" stroke-width="1.6"/>
<line x1="1193" y1="1488.3" x2="1193" y2="1641" stroke="#10242a" stroke-width="1.6"/>
<line x1="1257.2" y1="1488.3" x2="1257.2" y2="1641" stroke="#10242a" stroke-width="1.6"/>
<line x1="1601.5" y1="1488.3" x2="1601.5" y2="1641" stroke="#10242a" stroke-width="1.6"/>
<line x1="1723.6" y1="1488.3" x2="1723.6" y2="1641" stroke="#10242a" stroke-width="1.6"/>
<line x1="1804.1" y1="1488.3" x2="1804.1" y2="1641" stroke="#10242a" stroke-width="1.6"/>
<line x1="1953.7" y1="1488.3" x2="1953.7" y2="1641" stroke="#10242a" stroke-width="1.6"/>
<circle cx="1101.2" cy="1523.2" r="8.4" fill="#000"/>
<line x1="1101.2" y1="1523.2" x2="1268" y2="1523.2" stroke="#000" stroke-width="1.8"/>
<polygon points="1285.2,1523.2 1267,1513.4 1267,1533" fill="#000"/>
<circle cx="1193" cy="1577.5" r="8.4" fill="#000"/>
<line x1="1193" y1="1577.5" x2="1270" y2="1577.5" stroke="#000" stroke-width="1.8"/>
<polygon points="1268.5,1577.5 1285.2,1567.7 1285.2,1587.3" fill="#000"/>
<polyline points="1283.8,1500.8 1293.6,1512 1293.6,1542.7 1304.8,1552.4 1293.6,1562 1293.6,1593 1283.8,1604" stroke="#000" stroke-width="1.8" fill="none" stroke-linejoin="miter"/>
<text transform="translate(1309.8,1547.7) scale(0.91,1)" font-size="25" fill="#151515">See Illuminations</text>
<text transform="translate(1309.8,1570.6) scale(0.91,1)" font-size="25" fill="#2030f0">(SD941-2)</text>
<text transform="translate(1812.1,1555.8) scale(0.91,1)" font-size="25" fill="#151515">See Audio</text>
<text transform="translate(1812.1,1583.2) scale(0.91,1)" font-size="25" fill="#2030f0">(SD961-2)</text>
<circle cx="1953.7" cy="1560.7" r="9" fill="#000"/>
<line x1="1936" y1="1560.7" x2="1953.7" y2="1560.7" stroke="#000" stroke-width="1.8"/>
<polygon points="1919.3,1560.7 1936,1551 1936,1570.4" fill="#000"/>
<text transform="translate(2122.6,1518.8) scale(0.91,1)" text-anchor="middle" font-size="25" fill="#151515">See Driver</text>
<text transform="translate(2122.6,1544.6) scale(0.91,1)" text-anchor="middle" font-size="25" fill="#151515">Information System (DIS)</text>
<text transform="translate(2122.6,1568.7) scale(0.91,1)" text-anchor="middle" font-size="25" fill="#2030f0">(SD937-3)</text>
<polygon points="2125.8,1577.7 2117.1,1597 2134.5,1597" fill="#000"/>
<line x1="2125.8" y1="1595" x2="2125.8" y2="1641" stroke="#000" stroke-width="1.8"/>
<text transform="translate(1097,1621.8) scale(0.91,1)" text-anchor="end" font-size="25" fill="#151515">5</text>
<text transform="translate(1184.2,1621.8) scale(0.91,1)" text-anchor="end" font-size="25" fill="#151515">6</text>
<text transform="translate(1251,1621.8) scale(0.91,1)" text-anchor="end" font-size="25" fill="#151515">2</text>
<text transform="translate(1594.8,1621.8) scale(0.91,1)" text-anchor="end" font-size="25" fill="#151515">3</text>
<text transform="translate(1715.6,1621.8) scale(0.91,1)" text-anchor="end" font-size="25" fill="#151515">1</text>
<text transform="translate(1796.7,1621.8) scale(0.91,1)" text-anchor="end" font-size="25" fill="#151515">4</text>
<text transform="translate(1945.7,1621.8) scale(0.91,1)" text-anchor="end" font-size="25" fill="#151515">8</text>
<text transform="translate(2117.8,1621.8) scale(0.91,1)" text-anchor="end" font-size="25" fill="#151515">7</text>
<text transform="translate(2132.3,1622.8) scale(0.91,1)" font-size="25" fill="#2030f0">M78</text>
<line x1="1107" y1="1625.8" x2="2120" y2="1625.8" stroke="#111" stroke-width="1.9" stroke-dasharray="10 10"/>
<polyline points="1088.2,1639.5 1101.2,1627 1114.2,1639.5" stroke="#000" stroke-width="1.9" fill="none" stroke-linejoin="miter"/>
<polyline points="1180,1639.5 1193,1627 1206,1639.5" stroke="#000" stroke-width="1.9" fill="none" stroke-linejoin="miter"/>
<polyline points="1244.2,1639.5 1257.2,1627 1270.2,1639.5" stroke="#000" stroke-width="1.9" fill="none" stroke-linejoin="miter"/>
<polyline points="1588.5,1639.5 1601.5,1627 1614.5,1639.5" stroke="#000" stroke-width="1.9" fill="none" stroke-linejoin="miter"/>
<polyline points="1710.6,1639.5 1723.6,1627 1736.6,1639.5" stroke="#000" stroke-width="1.9" fill="none" stroke-linejoin="miter"/>
<polyline points="1791.1,1639.5 1804.1,1627 1817.1,1639.5" stroke="#000" stroke-width="1.9" fill="none" stroke-linejoin="miter"/>
<polyline points="1940.7,1639.5 1953.7,1627 1966.7,1639.5" stroke="#000" stroke-width="1.9" fill="none" stroke-linejoin="miter"/>
<polyline points="2112.8,1639.5 2125.8,1627 2138.8,1639.5" stroke="#000" stroke-width="1.9" fill="none" stroke-linejoin="miter"/>
<rect x="1069.2" y="1641.2" width="1090.4" height="157.3" fill="none" stroke="#000" stroke-width="4.2"/>
<polyline points="1088.2,1655 1101.2,1641.5 1114.2,1655" stroke="#10242a" stroke-width="1.6" fill="none" stroke-linejoin="miter"/>
<polyline points="1180,1655 1193,1641.5 1206,1655" stroke="#10242a" stroke-width="1.6" fill="none" stroke-linejoin="miter"/>
<polyline points="1244.2,1655 1257.2,1641.5 1270.2,1655" stroke="#10242a" stroke-width="1.6" fill="none" stroke-linejoin="miter"/>
<polyline points="1588.5,1655 1601.5,1641.5 1614.5,1655" stroke="#10242a" stroke-width="1.6" fill="none" stroke-linejoin="miter"/>
<polyline points="1710.6,1655 1723.6,1641.5 1736.6,1655" stroke="#10242a" stroke-width="1.6" fill="none" stroke-linejoin="miter"/>
<polyline points="1791.1,1655 1804.1,1641.5 1817.1,1655" stroke="#10242a" stroke-width="1.6" fill="none" stroke-linejoin="miter"/>
<polyline points="1940.7,1655 1953.7,1641.5 1966.7,1655" stroke="#10242a" stroke-width="1.6" fill="none" stroke-linejoin="miter"/>
<polyline points="2112.8,1655 2125.8,1641.5 2138.8,1655" stroke="#10242a" stroke-width="1.6" fill="none" stroke-linejoin="miter"/>
<text transform="translate(2166,1658.8) scale(0.91,1)" font-size="25" fill="#151515">AUDIO &amp;</text>
<text transform="translate(2166,1684.5) scale(0.91,1)" font-size="25" fill="#151515">CRUISE</text>
<text transform="translate(2166,1710.2) scale(0.91,1)" font-size="25" fill="#151515">REMOCON</text>
<text transform="translate(2166,1735.9) scale(0.91,1)" font-size="25" fill="#151515">SWITCH RH</text>
<rect x="2168.3" y="1749.5" width="86.9" height="54.7" fill="none" stroke="#333" stroke-width="2"/>
<text transform="translate(2172.5,1771.4) scale(0.91,1)" font-size="25" fill="#151515">PHOTO</text>
<text transform="translate(2172.5,1797) scale(0.91,1)" font-size="25" fill="#151515">55</text>
<text transform="translate(1121,1674.6) scale(0.91,1)" font-size="25" fill="#151515">(+)</text>
<text transform="translate(1214.6,1674.6) scale(0.91,1)" font-size="25" fill="#151515">(-)</text>
<line x1="1101.2" y1="1641" x2="1101.2" y2="1669.4" stroke="#000" stroke-width="1.8"/>
<polyline points="1101.2,1669.4 1111.2,1672.4 1091.2,1678.5 1111.2,1684.6 1091.2,1690.7 1111.2,1696.8 1091.2,1702.9 1101.2,1705.9" stroke="#000" stroke-width="1.8" fill="none" stroke-linejoin="miter"/>
<line x1="1101.2" y1="1705.9" x2="1101.2" y2="1724" stroke="#000" stroke-width="1.8"/>
<ellipse cx="1101.4" cy="1742.3" rx="17.8" ry="20" fill="none" stroke="#10242a" stroke-width="2"/>
<polyline points="1092.1,1733.3 1110.7,1733.3 1101.4,1751.3 1092.1,1733.3" stroke="#10242a" stroke-width="1.6" fill="none" stroke-linejoin="miter"/>
<line x1="1092.5" y1="1755.3" x2="1110.3" y2="1755.3" stroke="#10242a" stroke-width="1.6"/>
<line x1="1101.4" y1="1722" x2="1101.4" y2="1733.3" stroke="#10242a" stroke-width="1.6"/>
<line x1="1101.4" y1="1751" x2="1101.4" y2="1762" stroke="#10242a" stroke-width="1.6"/>
<polyline points="1101.4,1760 1101.4,1784.7 1193,1784.7 1193,1641" stroke="#000" stroke-width="1.8" fill="none" stroke-linejoin="miter"/>
<text transform="translate(1129,1751.4) scale(0.91,1)" font-size="25" fill="#151515">ILL.</text>
<line x1="1257.2" y1="1641" x2="1257.2" y2="1689" stroke="#000" stroke-width="1.8"/>
<circle cx="1257.2" cy="1688.8" r="5" fill="#000"/>
<line x1="1257.2" y1="1688.8" x2="1242.4" y2="1725.2" stroke="#000" stroke-width="1.8"/>
<circle cx="1241.4" cy="1728.2" r="5" fill="#000"/>
<circle cx="1271.2" cy="1728.2" r="5" fill="#000"/>
<path d="M1245.4,1733.2 Q1256.3,1742.2 1267.2,1733.2" stroke="#10242a" stroke-width="1.6" fill="none" stroke-dasharray="2.5 3"/>
<text transform="translate(1272.6,1708.8) scale(0.91,1)" font-size="25" fill="#151515">ON/OFF</text>
<polyline points="1271.2,1740 1281.2,1742.4 1261.2,1747.2 1281.2,1752 1261.2,1756.8 1281.2,1761.6 1271.2,1764" stroke="#000" stroke-width="1.8" fill="none" stroke-linejoin="miter"/>
<line x1="1271.2" y1="1728.2" x2="1271.2" y2="1740" stroke="#000" stroke-width="1.8"/>
<polyline points="1271.2,1764 1271.2,1779.4 1723.6,1779.4 1723.6,1641" stroke="#000" stroke-width="1.8" fill="none" stroke-linejoin="miter"/>
<polyline points="1375.3,1688.8 1375.3,1666.4 1601.5,1666.4" stroke="#000" stroke-width="1.8" fill="none" stroke-linejoin="miter"/>
<circle cx="1490.4" cy="1666.4" r="5" fill="#000"/>
<circle cx="1601.5" cy="1666.4" r="5" fill="#000"/>
<circle cx="1375.3" cy="1688.8" r="5" fill="#000"/>
<line x1="1375.3" y1="1688.8" x2="1357.7" y2="1725.2" stroke="#000" stroke-width="1.8"/>
<circle cx="1356.7" cy="1728.2" r="5" fill="#000"/>
<circle cx="1389.4" cy="1728.2" r="5" fill="#000"/>
<path d="M1360.7,1733.2 Q1373.1,1742.2 1385.4,1733.2" stroke="#10242a" stroke-width="1.6" fill="none" stroke-dasharray="2.5 3"/>
<line x1="1389.4" y1="1728.2" x2="1389.4" y2="1779.4" stroke="#000" stroke-width="1.8"/>
<circle cx="1389.4" cy="1779.4" r="5" fill="#000"/>
<text transform="translate(1381.5,1708.6) scale(0.91,1)" font-size="25" fill="#151515">CANCEL</text>
<line x1="1490.4" y1="1666.4" x2="1490.4" y2="1689" stroke="#000" stroke-width="1.8"/>
<circle cx="1490.4" cy="1689.6" r="5" fill="#000"/>
<line x1="1490.4" y1="1689.6" x2="1476" y2="1725.2" stroke="#000" stroke-width="1.8"/>
<circle cx="1475" cy="1728.2" r="5" fill="#000"/>
<circle cx="1504.9" cy="1728.2" r="5" fill="#000"/>
<path d="M1479,1733.2 Q1490,1742.2 1500.9,1733.2" stroke="#10242a" stroke-width="1.6" fill="none" stroke-dasharray="2.5 3"/>
<polyline points="1504.9,1740 1514.9,1742.4 1494.9,1747.2 1514.9,1752 1494.9,1756.8 1514.9,1761.6 1504.9,1764" stroke="#000" stroke-width="1.8" fill="none" stroke-linejoin="miter"/>
<line x1="1504.9" y1="1728.2" x2="1504.9" y2="1740" stroke="#000" stroke-width="1.8"/>
<line x1="1504.9" y1="1764" x2="1504.9" y2="1779.4" stroke="#000" stroke-width="1.8"/>
<circle cx="1504.9" cy="1779.4" r="5" fill="#000"/>
<text transform="translate(1502.7,1690.2) scale(0.91,1)" font-size="25" fill="#151515">COAST/</text>
<text transform="translate(1502.7,1716.3) scale(0.91,1)" font-size="25" fill="#151515">SET</text>
<line x1="1601.5" y1="1641" x2="1601.5" y2="1689.6" stroke="#000" stroke-width="1.8"/>
<circle cx="1601.5" cy="1689.6" r="5" fill="#000"/>
<line x1="1601.5" y1="1689.6" x2="1586.6" y2="1725.2" stroke="#000" stroke-width="1.8"/>
<circle cx="1585.6" cy="1728.2" r="5" fill="#000"/>
<circle cx="1615.3" cy="1728.2" r="5" fill="#000"/>
<path d="M1589.6,1733.2 Q1600.4,1742.2 1611.3,1733.2" stroke="#10242a" stroke-width="1.6" fill="none" stroke-dasharray="2.5 3"/>
<polyline points="1615.3,1740 1625.3,1742.4 1605.3,1747.2 1625.3,1752 1605.3,1756.8 1625.3,1761.6 1615.3,1764" stroke="#000" stroke-width="1.8" fill="none" stroke-linejoin="miter"/>
<line x1="1615.3" y1="1728.2" x2="1615.3" y2="1740" stroke="#000" stroke-width="1.8"/>
<line x1="1615.3" y1="1764" x2="1615.3" y2="1779.4" stroke="#000" stroke-width="1.8"/>
<circle cx="1615.3" cy="1779.4" r="5" fill="#000"/>
<text transform="translate(1615.3,1690.2) scale(0.91,1)" font-size="25" fill="#151515">RESUME/</text>
<text transform="translate(1615.3,1716.3) scale(0.91,1)" font-size="25" fill="#151515">ACCEL</text>
<line x1="1804.1" y1="1641" x2="1804.1" y2="1713.5" stroke="#000" stroke-width="1.8"/>
<polyline points="1804.1,1713.5 1813.1,1715.6 1795.1,1719.8 1813.1,1724 1795.1,1728.1 1813.1,1732.3 1804.1,1734.4" stroke="#000" stroke-width="1.8" fill="none" stroke-linejoin="miter"/>
<polyline points="1804.1,1734.4 1804.1,1779.4 1920,1779.4" stroke="#000" stroke-width="1.8" fill="none" stroke-linejoin="miter"/>
<polyline points="1919,1779.4 1921,1789.4 1925,1769.4 1929,1789.4 1933,1769.4 1937,1789.4 1939,1779.4" stroke="#000" stroke-width="1.8" fill="none" stroke-linejoin="miter"/>
<line x1="1939" y1="1779.4" x2="1995.5" y2="1779.4" stroke="#000" stroke-width="1.8"/>
<polyline points="1995,1779.4 1997,1789.4 2001,1769.4 2005,1789.4 2009,1769.4 2013,1789.4 2015,1779.4" stroke="#000" stroke-width="1.8" fill="none" stroke-linejoin="miter"/>
<polyline points="2014.8,1779.4 2125.8,1779.4 2125.8,1641" stroke="#000" stroke-width="1.8" fill="none" stroke-linejoin="miter"/>
<polyline points="1875.8,1689.4 1875.8,1666.8 2028.7,1666.8 2028.7,1689.4" stroke="#000" stroke-width="1.8" fill="none" stroke-linejoin="miter"/>
<line x1="1953.7" y1="1641" x2="1953.7" y2="1689.4" stroke="#000" stroke-width="1.8"/>
<circle cx="1953.7" cy="1666.8" r="5" fill="#000"/>
<circle cx="1875.8" cy="1689.4" r="5" fill="#000"/>
<line x1="1875.8" y1="1689.4" x2="1858.2" y2="1725" stroke="#000" stroke-width="1.8"/>
<circle cx="1857.2" cy="1728" r="5" fill="#000"/>
<circle cx="1890.3" cy="1728" r="5" fill="#000"/>
<path d="M1861.2,1733 Q1873.8,1742 1886.3,1733" stroke="#10242a" stroke-width="1.6" fill="none" stroke-dasharray="2.5 3"/>
<line x1="1890.3" y1="1728" x2="1890.3" y2="1779.4" stroke="#000" stroke-width="1.8"/>
<circle cx="1890.3" cy="1779.4" r="5" fill="#000"/>
<circle cx="1953.7" cy="1689.4" r="5" fill="#000"/>
<line x1="1953.7" y1="1689.4" x2="1935.4" y2="1725" stroke="#000" stroke-width="1.8"/>
<circle cx="1934.4" cy="1728" r="5" fill="#000"/>
<circle cx="1967.5" cy="1728" r="5" fill="#000"/>
<path d="M1938.4,1733 Q1951,1742 1963.5,1733" stroke="#10242a" stroke-width="1.6" fill="none" stroke-dasharray="2.5 3"/>
<line x1="1967.5" y1="1728" x2="1967.5" y2="1779.4" stroke="#000" stroke-width="1.8"/>
<circle cx="1967.5" cy="1779.4" r="5" fill="#000"/>
<circle cx="2028.7" cy="1689.4" r="5" fill="#000"/>
<line x1="2028.7" y1="1689.4" x2="2010.4" y2="1725" stroke="#000" stroke-width="1.8"/>
<circle cx="2009.4" cy="1728" r="5" fill="#000"/>
<circle cx="2042.2" cy="1728" r="5" fill="#000"/>
<path d="M2013.4,1733 Q2025.8,1742 2038.2,1733" stroke="#10242a" stroke-width="1.6" fill="none" stroke-dasharray="2.5 3"/>
<line x1="2042.2" y1="1728" x2="2042.2" y2="1779.4" stroke="#000" stroke-width="1.8"/>
<circle cx="2042.2" cy="1779.4" r="5" fill="#000"/>
<text transform="translate(1889.4,1708.7) scale(0.91,1)" font-size="25" fill="#151515">DISP</text>
<text transform="translate(1967.5,1708.7) scale(0.91,1)" font-size="25" fill="#151515">TRIP</text>
<text transform="translate(2041.5,1708.7) scale(0.91,1)" font-size="25" fill="#151515">RESET</text>
</svg></body></html>
